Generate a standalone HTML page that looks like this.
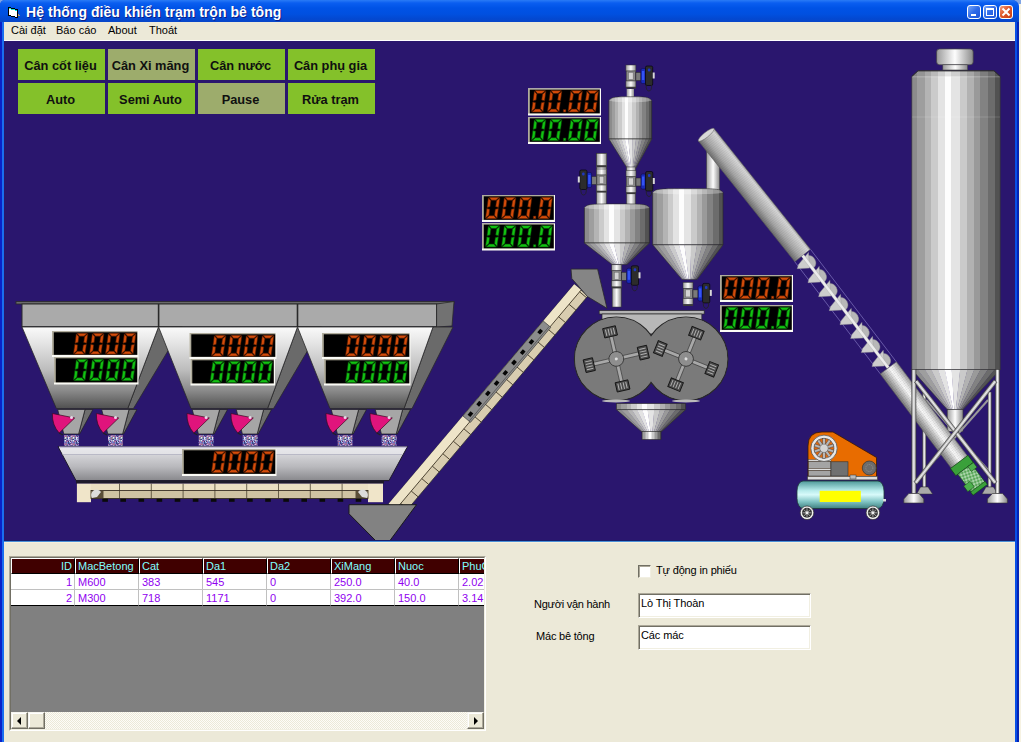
<!DOCTYPE html>
<html><head><meta charset="utf-8">
<style>
*{margin:0;padding:0;box-sizing:border-box}
html,body{width:1021px;height:742px;overflow:hidden;background:linear-gradient(#7fa4e4 0,#7fa4e4 4px,#f6f2e2 4px);font-family:"Liberation Sans",sans-serif}
.abs{position:absolute}
#win{position:absolute;left:0;top:0;width:1019px;height:742px;background:#0841d6;border-radius:5px 7px 0 0;overflow:hidden}
#title{position:absolute;left:0;top:0;width:1019px;height:22px;background:linear-gradient(#2a7bf6 0px,#0a5ef0 3px,#0053e6 8px,#0050e0 14px,#0348d0 19px,#0846c8 22px)}
#ttext{position:absolute;left:26px;top:4px;color:#fff;font-weight:bold;font-size:14px;letter-spacing:0.05px;white-space:nowrap;text-shadow:1px 1px 0 #0a1e8a}
#menu{position:absolute;left:4px;top:22px;width:1011px;height:18px;background:#ece9d8;font-size:11px;color:#000}
#menu span{position:absolute;top:2px}
#menuline{position:absolute;left:4px;top:40px;width:1011px;height:1px;background:#fff}
#draw{position:absolute;left:4px;top:41px;width:1011px;height:500px;background:#2a166e;overflow:hidden}
#bottom{position:absolute;left:4px;top:541px;width:1011px;height:201px;background:#ece9d8}
.btn{position:absolute;width:87px;height:31px;background:#84c12a;font-weight:bold;font-size:12.8px;color:#101010;text-align:center;line-height:33px;text-indent:-2px}
.btn.g{background:#9dac6c}
.tb{position:absolute;background:#fff;border-top:1px solid #aca899;border-left:1px solid #aca899;border-right:1px solid #fff;border-bottom:1px solid #fff;box-shadow:inset 1px 1px 0 #716f64, inset -1px -1px 0 #f1efe2;font-size:11px;padding-left:2px;color:#000}
.lbl{position:absolute;font-size:11px;color:#000;white-space:nowrap}
.htx{position:absolute;top:1px;height:15px;color:#80ffff;font-size:11px;line-height:15px;white-space:nowrap}
.dtx{position:absolute;height:15px;color:#9000f0;font-size:11px;line-height:16px;white-space:nowrap}
#grid{position:absolute;left:6px;top:15px;width:476px;height:174px;background:#808080;border-top:1px solid #aca899;border-left:1px solid #aca899;border-right:2px solid #fff;border-bottom:2px solid #fff;overflow:hidden}
.hdr{position:absolute;top:2px;height:15px;background:#400000;color:#7ff0f0;font-size:11px;line-height:15px}
.cell{position:absolute;height:15px;background:#fff;color:#a000e0;font-size:11px;line-height:15px}
</style></head><body>
<div id="win">
  <div id="title">
    <svg class="abs" style="left:0;top:0" width="24" height="22" viewBox="0 0 24 22" shape-rendering="crispEdges"><rect x="8" y="7" width="3" height="1" fill="#000"/><rect x="8" y="8" width="1" height="1" fill="#000"/><rect x="9" y="8" width="2" height="1" fill="#10e8e8"/><rect x="11" y="8" width="4" height="1" fill="#000"/><rect x="8" y="9" width="1" height="1" fill="#000"/><rect x="9" y="9" width="2" height="1" fill="#fff"/><rect x="11" y="9" width="4" height="1" fill="#10e8e8"/><rect x="15" y="9" width="3" height="1" fill="#000"/><rect x="8" y="10" width="1" height="1" fill="#000"/><rect x="9" y="10" width="6" height="1" fill="#fff"/><rect x="15" y="10" width="2" height="1" fill="#10e8e8"/><rect x="17" y="10" width="1" height="1" fill="#000"/><rect x="8" y="11" width="1" height="1" fill="#000"/><rect x="9" y="11" width="8" height="1" fill="#fff"/><rect x="17" y="11" width="1" height="1" fill="#000"/><rect x="8" y="12" width="1" height="1" fill="#000"/><rect x="9" y="12" width="8" height="1" fill="#fff"/><rect x="17" y="12" width="1" height="1" fill="#000"/><rect x="8" y="13" width="1" height="1" fill="#000"/><rect x="9" y="13" width="8" height="1" fill="#fff"/><rect x="17" y="13" width="1" height="1" fill="#000"/><rect x="8" y="14" width="1" height="1" fill="#000"/><rect x="9" y="14" width="8" height="1" fill="#fff"/><rect x="17" y="14" width="1" height="1" fill="#000"/><rect x="8" y="15" width="3" height="1" fill="#000"/><rect x="11" y="15" width="6" height="1" fill="#fff"/><rect x="17" y="15" width="1" height="1" fill="#000"/><rect x="11" y="16" width="4" height="1" fill="#000"/><rect x="15" y="16" width="2" height="1" fill="#fff"/><rect x="17" y="16" width="1" height="1" fill="#000"/><rect x="15" y="17" width="3" height="1" fill="#000"/><rect x="18" y="15" width="2" height="1" fill="#a89070"/><rect x="18" y="14" width="1" height="1" fill="#a89070"/></svg>
    <div id="ttext">Hệ thống điều khiển trạm trộn bê tông</div>
    <div class="abs" style="left:967px;top:5px;width:14px;height:14px;border:1px solid #fff;border-radius:3px;background:linear-gradient(135deg,#7aa8fa,#2e6ae8 50%,#1f55d8)"><div class="abs" style="left:3px;top:8px;width:5px;height:2px;background:#fff"></div></div>
    <div class="abs" style="left:983px;top:5px;width:14px;height:14px;border:1px solid #fff;border-radius:3px;background:linear-gradient(135deg,#7aa8fa,#2e6ae8 50%,#1f55d8)"><div class="abs" style="left:2px;top:2px;width:8px;height:8px;border:1px solid #fff;border-top-width:2px"></div></div>
    <div class="abs" style="left:999px;top:5px;width:14px;height:14px;border:1px solid #fff;border-radius:3px;background:linear-gradient(135deg,#f4a080,#e0582a 45%,#c63c12)"><svg class="abs" style="left:1px;top:1px" width="10" height="10" viewBox="0 0 10 10"><path d="M1.5,1.5 L8.5,8.5 M8.5,1.5 L1.5,8.5" stroke="#fff" stroke-width="2"/></svg></div>
  </div>
  <div id="menu">
    <span style="left:7px">Cài đặt</span>
    <span style="left:52px">Báo cáo</span>
    <span style="left:104px">About</span>
    <span style="left:145px">Thoát</span>
  </div>
  <div id="menuline"></div>
  <div id="draw">
    <svg id="svg" class="abs" style="left:-4px;top:-41px" width="1021" height="742" viewBox="0 0 1021 742">
<defs>
<linearGradient id="cyl" x1="0" y1="0" x2="1" y2="0"><stop offset="0" stop-color="#8c8c8c"/><stop offset="0.064" stop-color="#8c8c8c"/><stop offset="0.064" stop-color="#9e9e9e"/><stop offset="0.147" stop-color="#9e9e9e"/><stop offset="0.147" stop-color="#b4b4b4"/><stop offset="0.218" stop-color="#b4b4b4"/><stop offset="0.218" stop-color="#cbcbcb"/><stop offset="0.295" stop-color="#cbcbcb"/><stop offset="0.295" stop-color="#e3e3e3"/><stop offset="0.372" stop-color="#e3e3e3"/><stop offset="0.372" stop-color="#fdfdfd"/><stop offset="0.449" stop-color="#fdfdfd"/><stop offset="0.449" stop-color="#e4e4e4"/><stop offset="0.545" stop-color="#e4e4e4"/><stop offset="0.545" stop-color="#cacaca"/><stop offset="0.628" stop-color="#cacaca"/><stop offset="0.628" stop-color="#b2b2b2"/><stop offset="0.705" stop-color="#b2b2b2"/><stop offset="0.705" stop-color="#9a9a9a"/><stop offset="0.776" stop-color="#9a9a9a"/><stop offset="0.776" stop-color="#828282"/><stop offset="0.859" stop-color="#828282"/><stop offset="0.859" stop-color="#6c6c6c"/><stop offset="0.936" stop-color="#6c6c6c"/><stop offset="0.936" stop-color="#525252"/><stop offset="1" stop-color="#525252"/></linearGradient>
<linearGradient id="binface" x1="0" y1="0" x2="0" y2="1"><stop offset="0" stop-color="#fafafa"/><stop offset="0.22" stop-color="#e2e2e2"/><stop offset="0.53" stop-color="#bcbcbc"/><stop offset="0.78" stop-color="#8a8a8a"/><stop offset="1" stop-color="#505050"/></linearGradient>
<linearGradient id="weigh" x1="0" y1="0" x2="0" y2="1"><stop offset="0" stop-color="#e8e8ec"/><stop offset="0.23" stop-color="#e2e2e6"/><stop offset="0.24" stop-color="#d4d4d8"/><stop offset="0.6" stop-color="#b8b8bc"/><stop offset="1" stop-color="#88888c"/></linearGradient>
<linearGradient id="tube" x1="0" y1="0" x2="0" y2="1"><stop offset="0" stop-color="#a0a0a0"/><stop offset="0.12" stop-color="#d8d8d8"/><stop offset="0.3" stop-color="#cacaca"/><stop offset="0.65" stop-color="#a8a8a8"/><stop offset="1" stop-color="#6e6e6e"/></linearGradient><linearGradient id="tube2" x1="0" y1="0" x2="0" y2="1"><stop offset="0" stop-color="#9a9a9a"/><stop offset="0.3" stop-color="#e8e8e8"/><stop offset="0.45" stop-color="#fafafa"/><stop offset="0.7" stop-color="#c0c0c0"/><stop offset="1" stop-color="#7a7a7a"/></linearGradient><pattern id="vdith" width="2" height="2" patternUnits="userSpaceOnUse"><rect width="1" height="2" fill="#000" fill-opacity="0.06"/></pattern>
<linearGradient id="tank" x1="0" y1="0" x2="0" y2="1"><stop offset="0" stop-color="#4f9a9a"/><stop offset="0.35" stop-color="#b8ecec"/><stop offset="0.5" stop-color="#d8fafa"/><stop offset="0.75" stop-color="#80c4c4"/><stop offset="1" stop-color="#3e8080"/></linearGradient>
<linearGradient id="hcap" x1="0" y1="0" x2="1" y2="0"><stop offset="0" stop-color="#9a9a9a"/><stop offset="0.5" stop-color="#fdfdfd"/><stop offset="1" stop-color="#8a8a8a"/></linearGradient>
<linearGradient id="leg" x1="0" y1="0" x2="1" y2="0"><stop offset="0" stop-color="#8a8a8a"/><stop offset="0.5" stop-color="#f4f4f4"/><stop offset="1" stop-color="#7a7a7a"/></linearGradient>
<linearGradient id="brace" x1="0" y1="0" x2="0" y2="1"><stop offset="0" stop-color="#8a8a8a"/><stop offset="0.5" stop-color="#f0f0f0"/><stop offset="1" stop-color="#7a7a7a"/></linearGradient>
<pattern id="mat" width="8" height="8" patternUnits="userSpaceOnUse"><rect width="8" height="8" fill="#8880c0"/><rect x="0" y="0" width="1" height="1" fill="#a0a0c0"/><rect x="1" y="0" width="1" height="1" fill="#e8e8f0"/><rect x="2" y="0" width="1" height="1" fill="#8060b0"/><rect x="3" y="0" width="1" height="1" fill="#505090"/><rect x="4" y="0" width="1" height="1" fill="#b070b0"/><rect x="5" y="0" width="1" height="1" fill="#7090d0"/><rect x="6" y="0" width="1" height="1" fill="#8080b0"/><rect x="7" y="0" width="1" height="1" fill="#c0c0e0"/><rect x="0" y="1" width="1" height="1" fill="#7090d0"/><rect x="1" y="1" width="1" height="1" fill="#a0a0c0"/><rect x="2" y="1" width="1" height="1" fill="#a07090"/><rect x="3" y="1" width="1" height="1" fill="#b070b0"/><rect x="4" y="1" width="1" height="1" fill="#3a3a70"/><rect x="5" y="1" width="1" height="1" fill="#c0c0e0"/><rect x="6" y="1" width="1" height="1" fill="#404080"/><rect x="7" y="1" width="1" height="1" fill="#b070b0"/><rect x="0" y="2" width="1" height="1" fill="#7090d0"/><rect x="1" y="2" width="1" height="1" fill="#8060b0"/><rect x="2" y="2" width="1" height="1" fill="#8060b0"/><rect x="3" y="2" width="1" height="1" fill="#7090d0"/><rect x="4" y="2" width="1" height="1" fill="#404080"/><rect x="5" y="2" width="1" height="1" fill="#7090d0"/><rect x="6" y="2" width="1" height="1" fill="#c0c0e0"/><rect x="7" y="2" width="1" height="1" fill="#8060b0"/><rect x="0" y="3" width="1" height="1" fill="#b070b0"/><rect x="1" y="3" width="1" height="1" fill="#8080b0"/><rect x="2" y="3" width="1" height="1" fill="#a07090"/><rect x="3" y="3" width="1" height="1" fill="#7090d0"/><rect x="4" y="3" width="1" height="1" fill="#404080"/><rect x="5" y="3" width="1" height="1" fill="#505090"/><rect x="6" y="3" width="1" height="1" fill="#505090"/><rect x="7" y="3" width="1" height="1" fill="#a07090"/><rect x="0" y="4" width="1" height="1" fill="#b070b0"/><rect x="1" y="4" width="1" height="1" fill="#a07090"/><rect x="2" y="4" width="1" height="1" fill="#a07090"/><rect x="3" y="4" width="1" height="1" fill="#8060b0"/><rect x="4" y="4" width="1" height="1" fill="#b070b0"/><rect x="5" y="4" width="1" height="1" fill="#404080"/><rect x="6" y="4" width="1" height="1" fill="#b070b0"/><rect x="7" y="4" width="1" height="1" fill="#c0c0e0"/><rect x="0" y="5" width="1" height="1" fill="#8080b0"/><rect x="1" y="5" width="1" height="1" fill="#e8e8f0"/><rect x="2" y="5" width="1" height="1" fill="#90b0a0"/><rect x="3" y="5" width="1" height="1" fill="#8060b0"/><rect x="4" y="5" width="1" height="1" fill="#e8e8f0"/><rect x="5" y="5" width="1" height="1" fill="#c0c0e0"/><rect x="6" y="5" width="1" height="1" fill="#7090d0"/><rect x="7" y="5" width="1" height="1" fill="#a07090"/><rect x="0" y="6" width="1" height="1" fill="#90b0a0"/><rect x="1" y="6" width="1" height="1" fill="#c0c0e0"/><rect x="2" y="6" width="1" height="1" fill="#8080b0"/><rect x="3" y="6" width="1" height="1" fill="#505090"/><rect x="4" y="6" width="1" height="1" fill="#e8e8f0"/><rect x="5" y="6" width="1" height="1" fill="#7090d0"/><rect x="6" y="6" width="1" height="1" fill="#a07090"/><rect x="7" y="6" width="1" height="1" fill="#a07090"/><rect x="0" y="7" width="1" height="1" fill="#505090"/><rect x="1" y="7" width="1" height="1" fill="#404080"/><rect x="2" y="7" width="1" height="1" fill="#a0a0c0"/><rect x="3" y="7" width="1" height="1" fill="#7090d0"/><rect x="4" y="7" width="1" height="1" fill="#c0c0e0"/><rect x="5" y="7" width="1" height="1" fill="#d0b0d0"/><rect x="6" y="7" width="1" height="1" fill="#7090d0"/><rect x="7" y="7" width="1" height="1" fill="#a07090"/></pattern>
<pattern id="dith" width="2" height="2" patternUnits="userSpaceOnUse"><rect width="2" height="2" fill="#fff" fill-opacity="0"/><rect width="1" height="1" fill="#000" fill-opacity="0.12"/></pattern>
<pattern id="gdith" width="2" height="2" patternUnits="userSpaceOnUse"><rect width="1" height="1" fill="#2a8a2a"/><rect x="1" y="1" width="1" height="1" fill="#2a8a2a"/></pattern>
</defs>
<g id="bins">
<rect x="16" y="301.5" width="438" height="2.5" fill="#6a6a6a" stroke="#2a2a2a" stroke-width="0.8"/>
<rect x="22" y="304" width="414.6" height="22.7" fill="#aaaaaa" stroke="#2a2a2a" stroke-width="1"/>
<polygon points="436.6,304.0 454.0,301.5 452.0,326.0 436.6,327.0" fill="#727272" stroke="#2a2a2a" stroke-width="0.8" />
<line x1="158.6" y1="304" x2="158.6" y2="327" stroke="#2a2a2a" stroke-width="1.6"/>
<line x1="297.5" y1="304" x2="297.5" y2="327" stroke="#2a2a2a" stroke-width="1.6"/>
<polygon points="158.5,327.0 182.3,327.0 133.4,408.6 127.7,408.6" fill="#6a6a6a" stroke="#2a2a2a" stroke-width="0.8" />
<polygon points="22.0,327.0 158.5,327.0 127.7,408.6 56.4,408.6" fill="url(#binface)" stroke="#2a2a2a" stroke-width="0.8" />
<polygon points="85.0,409.5 92.9,409.5 79.6,434.0 78.6,434.0" fill="#6e6e6e" stroke="#1e1e1e" stroke-width="0.7" />
<polygon points="57.7,409.5 85.0,409.5 78.6,434.0 63.8,434.0" fill="#a6a6a6" stroke="#1e1e1e" stroke-width="0.7" />
<rect x="64.1" y="435" width="14.8" height="10.6" fill="url(#mat)"/>
<path d="M52.4,413.5 L74.7,418 L59.2,433 Q51.9,425 52.4,413.5Z" fill="#e0147c" stroke="#3a0a20" stroke-width="0.7"/>
<line x1="59.2" y1="433" x2="62.9" y2="435" stroke="#222" stroke-width="1.2"/>
<circle cx="71.5" cy="417.4" r="1.5" fill="#e8d8e8"/>
<polygon points="129.0,409.5 136.9,409.5 123.6,434.0 122.6,434.0" fill="#6e6e6e" stroke="#1e1e1e" stroke-width="0.7" />
<polygon points="101.7,409.5 129.0,409.5 122.6,434.0 107.8,434.0" fill="#a6a6a6" stroke="#1e1e1e" stroke-width="0.7" />
<rect x="108.1" y="435" width="14.8" height="10.6" fill="url(#mat)"/>
<path d="M96.4,413.5 L118.7,418 L103.2,433 Q95.9,425 96.4,413.5Z" fill="#e0147c" stroke="#3a0a20" stroke-width="0.7"/>
<line x1="103.2" y1="433" x2="106.9" y2="435" stroke="#222" stroke-width="1.2"/>
<circle cx="115.5" cy="417.4" r="1.5" fill="#e8d8e8"/>
<polygon points="297.5,327.0 321.5,327.0 273.5,408.6 267.5,408.6" fill="#6a6a6a" stroke="#2a2a2a" stroke-width="0.8" />
<polygon points="158.6,327.0 297.5,327.0 267.5,408.6 191.0,408.6" fill="url(#binface)" stroke="#2a2a2a" stroke-width="0.8" />
<polygon points="219.6,409.5 227.5,409.5 214.2,434.0 213.2,434.0" fill="#6e6e6e" stroke="#1e1e1e" stroke-width="0.7" />
<polygon points="192.3,409.5 219.6,409.5 213.2,434.0 198.4,434.0" fill="#a6a6a6" stroke="#1e1e1e" stroke-width="0.7" />
<rect x="198.7" y="435" width="14.8" height="10.6" fill="url(#mat)"/>
<path d="M187.0,413.5 L209.3,418 L193.8,433 Q186.5,425 187.0,413.5Z" fill="#e0147c" stroke="#3a0a20" stroke-width="0.7"/>
<line x1="193.8" y1="433" x2="197.5" y2="435" stroke="#222" stroke-width="1.2"/>
<circle cx="206.1" cy="417.4" r="1.5" fill="#e8d8e8"/>
<polygon points="263.6,409.5 271.5,409.5 258.2,434.0 257.2,434.0" fill="#6e6e6e" stroke="#1e1e1e" stroke-width="0.7" />
<polygon points="236.3,409.5 263.6,409.5 257.2,434.0 242.4,434.0" fill="#a6a6a6" stroke="#1e1e1e" stroke-width="0.7" />
<rect x="242.7" y="435" width="14.8" height="10.6" fill="url(#mat)"/>
<path d="M231.0,413.5 L253.3,418 L237.8,433 Q230.5,425 231.0,413.5Z" fill="#e0147c" stroke="#3a0a20" stroke-width="0.7"/>
<line x1="237.8" y1="433" x2="241.5" y2="435" stroke="#222" stroke-width="1.2"/>
<circle cx="250.1" cy="417.4" r="1.5" fill="#e8d8e8"/>
<polygon points="433.0,327.0 453.0,327.0 412.0,408.6 404.0,408.6" fill="#6a6a6a" stroke="#2a2a2a" stroke-width="0.8" />
<polygon points="297.5,327.0 433.0,327.0 404.0,408.6 330.0,408.6" fill="url(#binface)" stroke="#2a2a2a" stroke-width="0.8" />
<polygon points="358.6,409.5 366.5,409.5 353.2,434.0 352.2,434.0" fill="#6e6e6e" stroke="#1e1e1e" stroke-width="0.7" />
<polygon points="331.3,409.5 358.6,409.5 352.2,434.0 337.4,434.0" fill="#a6a6a6" stroke="#1e1e1e" stroke-width="0.7" />
<rect x="337.7" y="435" width="14.8" height="10.6" fill="url(#mat)"/>
<path d="M326.0,413.5 L348.3,418 L332.8,433 Q325.5,425 326.0,413.5Z" fill="#e0147c" stroke="#3a0a20" stroke-width="0.7"/>
<line x1="332.8" y1="433" x2="336.5" y2="435" stroke="#222" stroke-width="1.2"/>
<circle cx="345.1" cy="417.4" r="1.5" fill="#e8d8e8"/>
<polygon points="402.6,409.5 410.5,409.5 397.2,434.0 396.2,434.0" fill="#6e6e6e" stroke="#1e1e1e" stroke-width="0.7" />
<polygon points="375.3,409.5 402.6,409.5 396.2,434.0 381.4,434.0" fill="#a6a6a6" stroke="#1e1e1e" stroke-width="0.7" />
<rect x="381.7" y="435" width="14.8" height="10.6" fill="url(#mat)"/>
<path d="M370.0,413.5 L392.3,418 L376.8,433 Q369.5,425 370.0,413.5Z" fill="#e0147c" stroke="#3a0a20" stroke-width="0.7"/>
<line x1="376.8" y1="433" x2="380.5" y2="435" stroke="#222" stroke-width="1.2"/>
<circle cx="389.1" cy="417.4" r="1.5" fill="#e8d8e8"/>
<rect x="52" y="331" width="86.5" height="26.0" fill="#fbfbf6"/>
<rect x="52" y="331" width="85.5" height="24.0" fill="#b0ac9c"/>
<rect x="53.8" y="332.3" width="83.4" height="22.5" fill="#000"/>
<path d="M124.95,333.20 L135.45,333.20 L132.02,336.20 L127.52,336.20ZM124.32,333.75 L126.89,336.75 L126.09,342.40 L122.98,343.15ZM122.82,344.25 L125.71,345.00 L124.91,350.65 L121.48,353.65ZM135.92,333.75 L134.58,343.15 L131.69,342.40 L132.49,336.75ZM134.42,344.25 L133.08,353.65 L130.51,350.65 L131.31,345.00ZM121.95,354.20 L132.45,354.20 L129.88,351.20 L125.38,351.20ZM108.95,333.20 L119.45,333.20 L116.02,336.20 L111.52,336.20ZM108.32,333.75 L110.89,336.75 L110.09,342.40 L106.98,343.15ZM106.82,344.25 L109.71,345.00 L108.91,350.65 L105.48,353.65ZM119.92,333.75 L118.58,343.15 L115.69,342.40 L116.49,336.75ZM118.42,344.25 L117.08,353.65 L114.51,350.65 L115.31,345.00ZM105.95,354.20 L116.45,354.20 L113.88,351.20 L109.38,351.20ZM92.95,333.20 L103.45,333.20 L100.02,336.20 L95.52,336.20ZM92.32,333.75 L94.89,336.75 L94.09,342.40 L90.98,343.15ZM90.82,344.25 L93.71,345.00 L92.91,350.65 L89.48,353.65ZM103.92,333.75 L102.58,343.15 L99.69,342.40 L100.49,336.75ZM102.42,344.25 L101.08,353.65 L98.51,350.65 L99.31,345.00ZM89.95,354.20 L100.45,354.20 L97.88,351.20 L93.38,351.20ZM76.95,333.20 L87.45,333.20 L84.02,336.20 L79.52,336.20ZM76.32,333.75 L78.89,336.75 L78.09,342.40 L74.98,343.15ZM74.82,344.25 L77.71,345.00 L76.91,350.65 L73.48,353.65ZM87.92,333.75 L86.58,343.15 L83.69,342.40 L84.49,336.75ZM86.42,344.25 L85.08,353.65 L82.51,350.65 L83.31,345.00ZM73.95,354.20 L84.45,354.20 L81.88,351.20 L77.38,351.20Z" fill="#d44c0a" stroke="#4a1800" stroke-width="0.6"/>
<rect x="54" y="357" width="84.5" height="27.5" fill="#fbfbf6"/>
<rect x="54" y="357" width="83.5" height="25.5" fill="#b0ac9c"/>
<rect x="55.8" y="358.3" width="81.4" height="24.0" fill="#000"/>
<path d="M124.95,359.20 L135.45,359.20 L132.03,362.20 L127.53,362.20ZM124.32,359.75 L126.90,362.75 L126.08,368.65 L122.98,369.40ZM122.82,370.50 L125.72,371.25 L124.90,377.15 L121.48,380.15ZM135.92,359.75 L134.58,369.40 L131.68,368.65 L132.50,362.75ZM134.42,370.50 L133.08,380.15 L130.50,377.15 L131.32,371.25ZM121.95,380.70 L132.45,380.70 L129.87,377.70 L125.37,377.70ZM108.95,359.20 L119.45,359.20 L116.03,362.20 L111.53,362.20ZM108.32,359.75 L110.90,362.75 L110.08,368.65 L106.98,369.40ZM106.82,370.50 L109.72,371.25 L108.90,377.15 L105.48,380.15ZM119.92,359.75 L118.58,369.40 L115.68,368.65 L116.50,362.75ZM118.42,370.50 L117.08,380.15 L114.50,377.15 L115.32,371.25ZM105.95,380.70 L116.45,380.70 L113.87,377.70 L109.37,377.70ZM92.95,359.20 L103.45,359.20 L100.03,362.20 L95.53,362.20ZM92.32,359.75 L94.90,362.75 L94.08,368.65 L90.98,369.40ZM90.82,370.50 L93.72,371.25 L92.90,377.15 L89.48,380.15ZM103.92,359.75 L102.58,369.40 L99.68,368.65 L100.50,362.75ZM102.42,370.50 L101.08,380.15 L98.50,377.15 L99.32,371.25ZM89.95,380.70 L100.45,380.70 L97.87,377.70 L93.37,377.70ZM76.95,359.20 L87.45,359.20 L84.03,362.20 L79.53,362.20ZM76.32,359.75 L78.90,362.75 L78.08,368.65 L74.98,369.40ZM74.82,370.50 L77.72,371.25 L76.90,377.15 L73.48,380.15ZM87.92,359.75 L86.58,369.40 L83.68,368.65 L84.50,362.75ZM86.42,370.50 L85.08,380.15 L82.50,377.15 L83.32,371.25ZM73.95,380.70 L84.45,380.70 L81.87,377.70 L77.37,377.70Z" fill="#12c212" stroke="#054005" stroke-width="0.6"/>
<rect x="189.5" y="333" width="87.0" height="26.0" fill="#fbfbf6"/>
<rect x="189.5" y="333" width="86.0" height="24.0" fill="#b0ac9c"/>
<rect x="191.3" y="334.3" width="83.9" height="22.5" fill="#000"/>
<path d="M262.95,335.20 L273.45,335.20 L270.02,338.20 L265.52,338.20ZM262.32,335.75 L264.89,338.75 L264.09,344.40 L260.98,345.15ZM260.82,346.25 L263.71,347.00 L262.91,352.65 L259.48,355.65ZM273.92,335.75 L272.58,345.15 L269.69,344.40 L270.49,338.75ZM272.42,346.25 L271.08,355.65 L268.51,352.65 L269.31,347.00ZM259.95,356.20 L270.45,356.20 L267.88,353.20 L263.38,353.20ZM246.95,335.20 L257.45,335.20 L254.02,338.20 L249.52,338.20ZM246.32,335.75 L248.89,338.75 L248.09,344.40 L244.98,345.15ZM244.82,346.25 L247.71,347.00 L246.91,352.65 L243.48,355.65ZM257.92,335.75 L256.58,345.15 L253.69,344.40 L254.49,338.75ZM256.42,346.25 L255.08,355.65 L252.51,352.65 L253.31,347.00ZM243.95,356.20 L254.45,356.20 L251.88,353.20 L247.38,353.20ZM230.95,335.20 L241.45,335.20 L238.02,338.20 L233.52,338.20ZM230.32,335.75 L232.89,338.75 L232.09,344.40 L228.98,345.15ZM228.82,346.25 L231.71,347.00 L230.91,352.65 L227.48,355.65ZM241.92,335.75 L240.58,345.15 L237.69,344.40 L238.49,338.75ZM240.42,346.25 L239.08,355.65 L236.51,352.65 L237.31,347.00ZM227.95,356.20 L238.45,356.20 L235.88,353.20 L231.38,353.20ZM214.95,335.20 L225.45,335.20 L222.02,338.20 L217.52,338.20ZM214.32,335.75 L216.89,338.75 L216.09,344.40 L212.98,345.15ZM212.82,346.25 L215.71,347.00 L214.91,352.65 L211.48,355.65ZM225.92,335.75 L224.58,345.15 L221.69,344.40 L222.49,338.75ZM224.42,346.25 L223.08,355.65 L220.51,352.65 L221.31,347.00ZM211.95,356.20 L222.45,356.20 L219.88,353.20 L215.38,353.20Z" fill="#d44c0a" stroke="#4a1800" stroke-width="0.6"/>
<rect x="190.5" y="359" width="84.5" height="26.5" fill="#fbfbf6"/>
<rect x="190.5" y="359" width="83.5" height="24.5" fill="#b0ac9c"/>
<rect x="192.3" y="360.3" width="81.4" height="23.0" fill="#000"/>
<path d="M261.45,361.20 L271.95,361.20 L268.53,364.20 L264.03,364.20ZM260.82,361.75 L263.40,364.75 L262.58,370.65 L259.48,371.40ZM259.32,372.50 L262.22,373.25 L261.40,379.15 L257.98,382.15ZM272.42,361.75 L271.08,371.40 L268.18,370.65 L269.00,364.75ZM270.92,372.50 L269.58,382.15 L267.00,379.15 L267.82,373.25ZM258.45,382.70 L268.95,382.70 L266.37,379.70 L261.87,379.70ZM245.45,361.20 L255.95,361.20 L252.53,364.20 L248.03,364.20ZM244.82,361.75 L247.40,364.75 L246.58,370.65 L243.48,371.40ZM243.32,372.50 L246.22,373.25 L245.40,379.15 L241.98,382.15ZM256.42,361.75 L255.08,371.40 L252.18,370.65 L253.00,364.75ZM254.92,372.50 L253.58,382.15 L251.00,379.15 L251.82,373.25ZM242.45,382.70 L252.95,382.70 L250.37,379.70 L245.87,379.70ZM229.45,361.20 L239.95,361.20 L236.53,364.20 L232.03,364.20ZM228.82,361.75 L231.40,364.75 L230.58,370.65 L227.48,371.40ZM227.32,372.50 L230.22,373.25 L229.40,379.15 L225.98,382.15ZM240.42,361.75 L239.08,371.40 L236.18,370.65 L237.00,364.75ZM238.92,372.50 L237.58,382.15 L235.00,379.15 L235.82,373.25ZM226.45,382.70 L236.95,382.70 L234.37,379.70 L229.87,379.70ZM213.45,361.20 L223.95,361.20 L220.53,364.20 L216.03,364.20ZM212.82,361.75 L215.40,364.75 L214.58,370.65 L211.48,371.40ZM211.32,372.50 L214.22,373.25 L213.40,379.15 L209.98,382.15ZM224.42,361.75 L223.08,371.40 L220.18,370.65 L221.00,364.75ZM222.92,372.50 L221.58,382.15 L219.00,379.15 L219.82,373.25ZM210.45,382.70 L220.95,382.70 L218.37,379.70 L213.87,379.70Z" fill="#12c212" stroke="#054005" stroke-width="0.6"/>
<rect x="322" y="333" width="88.5" height="26.0" fill="#fbfbf6"/>
<rect x="322" y="333" width="87.5" height="24.0" fill="#b0ac9c"/>
<rect x="323.8" y="334.3" width="85.4" height="22.5" fill="#000"/>
<path d="M396.95,335.20 L407.45,335.20 L404.02,338.20 L399.52,338.20ZM396.32,335.75 L398.89,338.75 L398.09,344.40 L394.98,345.15ZM394.82,346.25 L397.71,347.00 L396.91,352.65 L393.48,355.65ZM407.92,335.75 L406.58,345.15 L403.69,344.40 L404.49,338.75ZM406.42,346.25 L405.08,355.65 L402.51,352.65 L403.31,347.00ZM393.95,356.20 L404.45,356.20 L401.88,353.20 L397.38,353.20ZM380.95,335.20 L391.45,335.20 L388.02,338.20 L383.52,338.20ZM380.32,335.75 L382.89,338.75 L382.09,344.40 L378.98,345.15ZM378.82,346.25 L381.71,347.00 L380.91,352.65 L377.48,355.65ZM391.92,335.75 L390.58,345.15 L387.69,344.40 L388.49,338.75ZM390.42,346.25 L389.08,355.65 L386.51,352.65 L387.31,347.00ZM377.95,356.20 L388.45,356.20 L385.88,353.20 L381.38,353.20ZM364.95,335.20 L375.45,335.20 L372.02,338.20 L367.52,338.20ZM364.32,335.75 L366.89,338.75 L366.09,344.40 L362.98,345.15ZM362.82,346.25 L365.71,347.00 L364.91,352.65 L361.48,355.65ZM375.92,335.75 L374.58,345.15 L371.69,344.40 L372.49,338.75ZM374.42,346.25 L373.08,355.65 L370.51,352.65 L371.31,347.00ZM361.95,356.20 L372.45,356.20 L369.88,353.20 L365.38,353.20ZM348.95,335.20 L359.45,335.20 L356.02,338.20 L351.52,338.20ZM348.32,335.75 L350.89,338.75 L350.09,344.40 L346.98,345.15ZM346.82,346.25 L349.71,347.00 L348.91,352.65 L345.48,355.65ZM359.92,335.75 L358.58,345.15 L355.69,344.40 L356.49,338.75ZM358.42,346.25 L357.08,355.65 L354.51,352.65 L355.31,347.00ZM345.95,356.20 L356.45,356.20 L353.88,353.20 L349.38,353.20Z" fill="#d44c0a" stroke="#4a1800" stroke-width="0.6"/>
<rect x="324" y="359" width="86.5" height="26.5" fill="#fbfbf6"/>
<rect x="324" y="359" width="85.5" height="24.5" fill="#b0ac9c"/>
<rect x="325.8" y="360.3" width="83.4" height="23.0" fill="#000"/>
<path d="M396.95,361.20 L407.45,361.20 L404.03,364.20 L399.53,364.20ZM396.32,361.75 L398.90,364.75 L398.08,370.65 L394.98,371.40ZM394.82,372.50 L397.72,373.25 L396.90,379.15 L393.48,382.15ZM407.92,361.75 L406.58,371.40 L403.68,370.65 L404.50,364.75ZM406.42,372.50 L405.08,382.15 L402.50,379.15 L403.32,373.25ZM393.95,382.70 L404.45,382.70 L401.87,379.70 L397.37,379.70ZM380.95,361.20 L391.45,361.20 L388.03,364.20 L383.53,364.20ZM380.32,361.75 L382.90,364.75 L382.08,370.65 L378.98,371.40ZM378.82,372.50 L381.72,373.25 L380.90,379.15 L377.48,382.15ZM391.92,361.75 L390.58,371.40 L387.68,370.65 L388.50,364.75ZM390.42,372.50 L389.08,382.15 L386.50,379.15 L387.32,373.25ZM377.95,382.70 L388.45,382.70 L385.87,379.70 L381.37,379.70ZM364.95,361.20 L375.45,361.20 L372.03,364.20 L367.53,364.20ZM364.32,361.75 L366.90,364.75 L366.08,370.65 L362.98,371.40ZM362.82,372.50 L365.72,373.25 L364.90,379.15 L361.48,382.15ZM375.92,361.75 L374.58,371.40 L371.68,370.65 L372.50,364.75ZM374.42,372.50 L373.08,382.15 L370.50,379.15 L371.32,373.25ZM361.95,382.70 L372.45,382.70 L369.87,379.70 L365.37,379.70ZM348.95,361.20 L359.45,361.20 L356.03,364.20 L351.53,364.20ZM348.32,361.75 L350.90,364.75 L350.08,370.65 L346.98,371.40ZM346.82,372.50 L349.72,373.25 L348.90,379.15 L345.48,382.15ZM359.92,361.75 L358.58,371.40 L355.68,370.65 L356.50,364.75ZM358.42,372.50 L357.08,382.15 L354.50,379.15 L355.32,373.25ZM345.95,382.70 L356.45,382.70 L353.87,379.70 L349.37,379.70Z" fill="#12c212" stroke="#054005" stroke-width="0.6"/>
</g>
<polygon points="58.0,446.6 407.5,446.6 389.0,480.6 76.0,480.6" fill="url(#weigh)" stroke="#1e1a2a" stroke-width="1" />
<line x1="59" y1="447" x2="407" y2="447" stroke="#b4acd8" stroke-width="1.2"/>
<line x1="62" y1="454.5" x2="403" y2="454.5" stroke="#a0a0b4" stroke-width="0.6"/>
<rect x="182" y="449" width="94.5" height="27.0" fill="#fbfbf6"/>
<rect x="182" y="449" width="93.5" height="25.0" fill="#b0ac9c"/>
<rect x="183.8" y="450.3" width="91.4" height="23.5" fill="#000"/>
<path d="M262.95,451.20 L273.45,451.20 L270.03,454.20 L265.53,454.20ZM262.32,451.75 L264.90,454.75 L264.08,460.65 L260.98,461.40ZM260.82,462.50 L263.72,463.25 L262.90,469.15 L259.48,472.15ZM273.92,451.75 L272.58,461.40 L269.68,460.65 L270.50,454.75ZM272.42,462.50 L271.08,472.15 L268.50,469.15 L269.32,463.25ZM259.95,472.70 L270.45,472.70 L267.87,469.70 L263.37,469.70ZM246.95,451.20 L257.45,451.20 L254.03,454.20 L249.53,454.20ZM246.32,451.75 L248.90,454.75 L248.08,460.65 L244.98,461.40ZM244.82,462.50 L247.72,463.25 L246.90,469.15 L243.48,472.15ZM257.92,451.75 L256.58,461.40 L253.68,460.65 L254.50,454.75ZM256.42,462.50 L255.08,472.15 L252.50,469.15 L253.32,463.25ZM243.95,472.70 L254.45,472.70 L251.87,469.70 L247.37,469.70ZM230.95,451.20 L241.45,451.20 L238.03,454.20 L233.53,454.20ZM230.32,451.75 L232.90,454.75 L232.08,460.65 L228.98,461.40ZM228.82,462.50 L231.72,463.25 L230.90,469.15 L227.48,472.15ZM241.92,451.75 L240.58,461.40 L237.68,460.65 L238.50,454.75ZM240.42,462.50 L239.08,472.15 L236.50,469.15 L237.32,463.25ZM227.95,472.70 L238.45,472.70 L235.87,469.70 L231.37,469.70ZM214.95,451.20 L225.45,451.20 L222.03,454.20 L217.53,454.20ZM214.32,451.75 L216.90,454.75 L216.08,460.65 L212.98,461.40ZM212.82,462.50 L215.72,463.25 L214.90,469.15 L211.48,472.15ZM225.92,451.75 L224.58,461.40 L221.68,460.65 L222.50,454.75ZM224.42,462.50 L223.08,472.15 L220.50,469.15 L221.32,463.25ZM211.95,472.70 L222.45,472.70 L219.87,469.70 L215.37,469.70Z" fill="#d44c0a" stroke="#4a1800" stroke-width="0.6"/>
<rect x="76" y="480.6" width="308" height="3" fill="#1e1a2a"/>
<rect x="76.9" y="483.6" width="14.1" height="18.6" fill="#f0e5c9"/>
<rect x="368" y="483.6" width="15" height="18.6" fill="#f0e5c9"/>
<rect x="91" y="483.6" width="277" height="7" fill="#ebdfc2"/>
<rect x="91" y="490.5" width="277" height="8" fill="#cfc3a3" stroke="#2e2618" stroke-width="0.8"/>
<line x1="119.5" y1="483.6" x2="119.5" y2="498.5" stroke="#3a3020" stroke-width="0.7"/>
<line x1="151.3" y1="483.6" x2="151.3" y2="498.5" stroke="#3a3020" stroke-width="0.7"/>
<line x1="183.1" y1="483.6" x2="183.1" y2="498.5" stroke="#3a3020" stroke-width="0.7"/>
<line x1="214.9" y1="483.6" x2="214.9" y2="498.5" stroke="#3a3020" stroke-width="0.7"/>
<line x1="246.7" y1="483.6" x2="246.7" y2="498.5" stroke="#3a3020" stroke-width="0.7"/>
<line x1="278.5" y1="483.6" x2="278.5" y2="498.5" stroke="#3a3020" stroke-width="0.7"/>
<line x1="310.3" y1="483.6" x2="310.3" y2="498.5" stroke="#3a3020" stroke-width="0.7"/>
<line x1="342.1" y1="483.6" x2="342.1" y2="498.5" stroke="#3a3020" stroke-width="0.7"/>
<path d="M91.5,491 h12 v7 h-12Z" fill="#5a4e38"/><path d="M92,498 a5,5 0 0 1 9,-6 l-4,5Z" fill="#dcdcdc"/>
<path d="M367.5,491 h-12 v7 h12Z" fill="#5a4e38"/><path d="M367,498 a5,5 0 0 0 -9,-6 l4,5Z" fill="#dcdcdc"/>
<rect x="102.3" y="498.8" width="5.6" height="3" fill="#0a0a0a"/>
<rect x="120.4" y="498.8" width="5.6" height="3" fill="#0a0a0a"/>
<rect x="138.5" y="498.8" width="5.6" height="3" fill="#0a0a0a"/>
<rect x="156.6" y="498.8" width="5.6" height="3" fill="#0a0a0a"/>
<rect x="174.7" y="498.8" width="5.6" height="3" fill="#0a0a0a"/>
<rect x="192.8" y="498.8" width="5.6" height="3" fill="#0a0a0a"/>
<rect x="210.9" y="498.8" width="5.6" height="3" fill="#0a0a0a"/>
<rect x="229.0" y="498.8" width="5.6" height="3" fill="#0a0a0a"/>
<rect x="247.1" y="498.8" width="5.6" height="3" fill="#0a0a0a"/>
<rect x="265.2" y="498.8" width="5.6" height="3" fill="#0a0a0a"/>
<rect x="283.3" y="498.8" width="5.6" height="3" fill="#0a0a0a"/>
<rect x="301.4" y="498.8" width="5.6" height="3" fill="#0a0a0a"/>
<rect x="319.5" y="498.8" width="5.6" height="3" fill="#0a0a0a"/>
<rect x="337.6" y="498.8" width="5.6" height="3" fill="#0a0a0a"/>
<rect x="355.7" y="498.8" width="5.6" height="3" fill="#0a0a0a"/>
<g transform="translate(388.7,503.8) rotate(-49.8)">
<rect x="0" y="0" width="287.5" height="18" fill="#d9cdb0" stroke="#2a2a2a" stroke-width="0.7"/>
<rect x="0" y="0" width="287.5" height="9.0" fill="#eee4c8"/>
<line x1="0" y1="9.0" x2="287.5" y2="9.0" stroke="#3a3020" stroke-width="0.8"/>
<line x1="8.0" y1="9.0" x2="8.0" y2="18" stroke="#3a3020" stroke-width="0.8"/>
<line x1="24.3" y1="9.0" x2="24.3" y2="18" stroke="#3a3020" stroke-width="0.8"/>
<line x1="40.6" y1="9.0" x2="40.6" y2="18" stroke="#3a3020" stroke-width="0.8"/>
<line x1="56.9" y1="9.0" x2="56.9" y2="18" stroke="#3a3020" stroke-width="0.8"/>
<line x1="73.2" y1="9.0" x2="73.2" y2="18" stroke="#3a3020" stroke-width="0.8"/>
<line x1="89.5" y1="9.0" x2="89.5" y2="18" stroke="#3a3020" stroke-width="0.8"/>
<line x1="105.8" y1="9.0" x2="105.8" y2="18" stroke="#3a3020" stroke-width="0.8"/>
<line x1="122.1" y1="9.0" x2="122.1" y2="18" stroke="#3a3020" stroke-width="0.8"/>
<line x1="138.4" y1="9.0" x2="138.4" y2="18" stroke="#3a3020" stroke-width="0.8"/>
<line x1="154.7" y1="9.0" x2="154.7" y2="18" stroke="#3a3020" stroke-width="0.8"/>
<line x1="171.0" y1="9.0" x2="171.0" y2="18" stroke="#3a3020" stroke-width="0.8"/>
<line x1="187.3" y1="9.0" x2="187.3" y2="18" stroke="#3a3020" stroke-width="0.8"/>
<line x1="203.6" y1="9.0" x2="203.6" y2="18" stroke="#3a3020" stroke-width="0.8"/>
<line x1="219.9" y1="9.0" x2="219.9" y2="18" stroke="#3a3020" stroke-width="0.8"/>
<line x1="236.2" y1="9.0" x2="236.2" y2="18" stroke="#3a3020" stroke-width="0.8"/>
<line x1="252.5" y1="9.0" x2="252.5" y2="18" stroke="#3a3020" stroke-width="0.8"/>
<line x1="268.8" y1="9.0" x2="268.8" y2="18" stroke="#3a3020" stroke-width="0.8"/>
<line x1="285.1" y1="9.0" x2="285.1" y2="18" stroke="#3a3020" stroke-width="0.8"/>
<rect x="115.0" y="0" width="124.4" height="9.9" fill="#8c8c8c" stroke="#333" stroke-width="0.6"/>
<line x1="115.0" y1="8.1" x2="239.3" y2="8.1" stroke="#555" stroke-width="0.8"/>
<rect x="119.0" y="2.7" width="4.6" height="3.6" fill="#050505"/>
<rect x="132.5" y="2.7" width="4.6" height="3.6" fill="#050505"/>
<rect x="146.0" y="2.7" width="4.6" height="3.6" fill="#050505"/>
<rect x="159.5" y="2.7" width="4.6" height="3.6" fill="#050505"/>
<rect x="173.0" y="2.7" width="4.6" height="3.6" fill="#050505"/>
<rect x="186.5" y="2.7" width="4.6" height="3.6" fill="#050505"/>
<rect x="200.0" y="2.7" width="4.6" height="3.6" fill="#050505"/>
<rect x="213.5" y="2.7" width="4.6" height="3.6" fill="#050505"/>
<rect x="227.0" y="2.7" width="4.6" height="3.6" fill="#050505"/>
</g>
<polygon points="571.0,269.1 597.6,269.1 607.0,308.3 587.4,296.5 571.8,278.5" fill="#858585" stroke="#2a2a2a" stroke-width="0.8" />
<polygon points="349.0,504.7 416.5,504.7 390.0,540.5 375.5,540.5 349.0,513.8" fill="#828282" stroke="#1a1a1a" stroke-width="1" />
<rect x="599.2" y="310.6" width="105" height="3.4" fill="#b4b4b4" stroke="#2a2a2a" stroke-width="0.7"/>
<polygon points="602.0,314.0 701.8,314.0 701.8,330.0 651.0,334.0 602.0,330.0" fill="#b8b8b8" stroke="#2a2a2a" stroke-width="0.7" />
<circle cx="616.3" cy="358.9" r="41.9" fill="#7a7a7a" stroke="#2a2a2a" stroke-width="1.2"/>
<circle cx="686" cy="358.9" r="41.9" fill="#7a7a7a" stroke="#2a2a2a" stroke-width="1.2"/>
<circle cx="616.3" cy="358.9" r="41.3" fill="#7a7a7a"/>
<circle cx="686" cy="358.9" r="41.3" fill="#7a7a7a"/>
<g transform="translate(616.3,358.9) rotate(-13)">
<g transform="rotate(0)"><rect x="6" y="-1.8" width="18" height="3.6" fill="#a8a8a8" stroke="#333" stroke-width="0.6"/><rect x="23" y="-6.5" width="9.5" height="13" fill="#4a4a4a" stroke="#141414" stroke-width="0.9"/><path d="M24.5,-4 h6.5 M24.5,-1.3 h6.5 M24.5,1.4 h6.5 M24.5,4.1 h6.5" stroke="#b0b0b0" stroke-width="1"/></g>
<g transform="rotate(90)"><rect x="6" y="-1.8" width="18" height="3.6" fill="#a8a8a8" stroke="#333" stroke-width="0.6"/><rect x="23" y="-6.5" width="9.5" height="13" fill="#4a4a4a" stroke="#141414" stroke-width="0.9"/><path d="M24.5,-4 h6.5 M24.5,-1.3 h6.5 M24.5,1.4 h6.5 M24.5,4.1 h6.5" stroke="#b0b0b0" stroke-width="1"/></g>
<g transform="rotate(180)"><rect x="6" y="-1.8" width="18" height="3.6" fill="#a8a8a8" stroke="#333" stroke-width="0.6"/><rect x="23" y="-6.5" width="9.5" height="13" fill="#4a4a4a" stroke="#141414" stroke-width="0.9"/><path d="M24.5,-4 h6.5 M24.5,-1.3 h6.5 M24.5,1.4 h6.5 M24.5,4.1 h6.5" stroke="#b0b0b0" stroke-width="1"/></g>
<g transform="rotate(270)"><rect x="6" y="-1.8" width="18" height="3.6" fill="#a8a8a8" stroke="#333" stroke-width="0.6"/><rect x="23" y="-6.5" width="9.5" height="13" fill="#4a4a4a" stroke="#141414" stroke-width="0.9"/><path d="M24.5,-4 h6.5 M24.5,-1.3 h6.5 M24.5,1.4 h6.5 M24.5,4.1 h6.5" stroke="#b0b0b0" stroke-width="1"/></g>
<circle r="7.4" fill="#8e8e8e" stroke="#333" stroke-width="0.8"/><circle r="1.5" fill="#ddd"/>
</g>
<g transform="translate(686,358.9) rotate(22)">
<g transform="rotate(0)"><rect x="6" y="-1.8" width="18" height="3.6" fill="#a8a8a8" stroke="#333" stroke-width="0.6"/><rect x="23" y="-6.5" width="9.5" height="13" fill="#4a4a4a" stroke="#141414" stroke-width="0.9"/><path d="M24.5,-4 h6.5 M24.5,-1.3 h6.5 M24.5,1.4 h6.5 M24.5,4.1 h6.5" stroke="#b0b0b0" stroke-width="1"/></g>
<g transform="rotate(90)"><rect x="6" y="-1.8" width="18" height="3.6" fill="#a8a8a8" stroke="#333" stroke-width="0.6"/><rect x="23" y="-6.5" width="9.5" height="13" fill="#4a4a4a" stroke="#141414" stroke-width="0.9"/><path d="M24.5,-4 h6.5 M24.5,-1.3 h6.5 M24.5,1.4 h6.5 M24.5,4.1 h6.5" stroke="#b0b0b0" stroke-width="1"/></g>
<g transform="rotate(180)"><rect x="6" y="-1.8" width="18" height="3.6" fill="#a8a8a8" stroke="#333" stroke-width="0.6"/><rect x="23" y="-6.5" width="9.5" height="13" fill="#4a4a4a" stroke="#141414" stroke-width="0.9"/><path d="M24.5,-4 h6.5 M24.5,-1.3 h6.5 M24.5,1.4 h6.5 M24.5,4.1 h6.5" stroke="#b0b0b0" stroke-width="1"/></g>
<g transform="rotate(270)"><rect x="6" y="-1.8" width="18" height="3.6" fill="#a8a8a8" stroke="#333" stroke-width="0.6"/><rect x="23" y="-6.5" width="9.5" height="13" fill="#4a4a4a" stroke="#141414" stroke-width="0.9"/><path d="M24.5,-4 h6.5 M24.5,-1.3 h6.5 M24.5,1.4 h6.5 M24.5,4.1 h6.5" stroke="#b0b0b0" stroke-width="1"/></g>
<circle r="7.4" fill="#8e8e8e" stroke="#333" stroke-width="0.8"/><circle r="1.5" fill="#ddd"/>
</g>
<ellipse cx="616" cy="401" rx="14" ry="1.5" fill="#bbb"/><ellipse cx="686" cy="401" rx="14" ry="1.5" fill="#bbb"/>
<rect x="616.4" y="403.6" width="69.2" height="6" fill="url(#cyl)" stroke="#2a2a2a" stroke-width="0.6"/>
<polygon points="616.40,409.6 621.13,409.6 643.32,432 642.00,432" fill="#8c8c8c"/>
<polygon points="620.83,409.6 626.87,409.6 644.89,432 643.22,432" fill="#9e9e9e"/>
<polygon points="626.57,409.6 631.79,409.6 646.24,432 644.79,432" fill="#b4b4b4"/>
<polygon points="631.49,409.6 637.11,409.6 647.71,432 646.14,432" fill="#cbcbcb"/>
<polygon points="636.81,409.6 642.44,409.6 649.17,432 647.61,432" fill="#e3e3e3"/>
<polygon points="642.14,409.6 647.77,409.6 650.63,432 649.07,432" fill="#fdfdfd"/>
<polygon points="647.47,409.6 654.41,409.6 652.46,432 650.53,432" fill="#e4e4e4"/>
<polygon points="654.11,409.6 660.16,409.6 654.03,432 652.36,432" fill="#cacaca"/>
<polygon points="659.86,409.6 665.49,409.6 655.50,432 653.93,432" fill="#b2b2b2"/>
<polygon points="665.19,409.6 670.40,409.6 656.84,432 655.39,432" fill="#9a9a9a"/>
<polygon points="670.10,409.6 676.14,409.6 658.42,432 656.74,432" fill="#828282"/>
<polygon points="675.84,409.6 681.47,409.6 659.88,432 658.32,432" fill="#6c6c6c"/>
<polygon points="681.17,409.6 685.90,409.6 661.10,432 659.78,432" fill="#525252"/>
<polygon points="616.4,409.6 685.6,409.6 661,432 642,432" fill="none" stroke="#2a2a2a" stroke-width="0.6"/>
<rect x="642" y="431.5" width="19" height="8" fill="url(#cyl)" stroke="#2a2a2a" stroke-width="0.6"/>
<rect x="626.7" y="89" width="7.3" height="8" fill="url(#hcap)"/>
<rect x="625.9" y="65" width="10" height="6" fill="url(#hcap)" stroke="#333" stroke-width="0.5"/>
<rect x="626.1999999999999" y="71" width="9.4" height="10" fill="#8a8a8a" stroke="#333" stroke-width="0.5"/>
<rect x="628.6999999999999" y="72.5" width="4.4" height="7" fill="#d4d4d4" stroke="#666" stroke-width="0.4"/>
<rect x="625.9" y="81" width="10" height="6" fill="url(#hcap)" stroke="#333" stroke-width="0.5"/>
<rect x="625.9" y="87" width="10" height="1.6" fill="#3a3a3a"/>
<rect x="635.9" y="72.5" width="5" height="8" fill="#7a7a7a" stroke="#222" stroke-width="0.5"/>
<rect x="640.9" y="68.5" width="4.8" height="15" fill="#1a2ab8" rx="1.5" stroke="#0a0a40" stroke-width="0.5"/>
<rect x="641.9" y="71" width="2.4" height="9" fill="#3454f4" />
<rect x="645.5" y="66" width="7.2" height="19.5" fill="#2c2c2c" rx="1.5" stroke="#000" stroke-width="0.6"/>
<rect x="647.9" y="68.5" width="2.5" height="3" fill="#2038c0" rx="1"/>
<rect x="652.7" y="72.5" width="2" height="6" fill="#d8d8d8" />
<path d="M646.1,85 q0,6 2.8,6 q2.8,0 2.8,-6" fill="none" stroke="#222" stroke-width="0.8"/>
<path d="M608.9,100.8 C610.9,96.8 616.9,96.8 630.3,96.8 C643.7,96.8 649.7,96.8 651.7,100.8 L651.7,139 L608.9,139 Z" fill="url(#cyl)" stroke="#2a2a2a" stroke-width="0.7"/>
<path d="M608.9,100.8 C610.9,96.8 616.9,96.8 630.3,96.8 C643.7,96.8 649.7,96.8 651.7,100.8 C641.7,102.8 618.9,102.8 608.9,100.8Z" fill="#fff" fill-opacity="0.3"/>
<polygon points="608.90,139 611.94,139 627.68,168 627.00,168" fill="#8c8c8c"/>
<polygon points="611.64,139 615.49,139 628.42,168 627.58,168" fill="#9e9e9e"/>
<polygon points="615.19,139 618.53,139 629.06,168 628.32,168" fill="#b4b4b4"/>
<polygon points="618.23,139 621.83,139 629.75,168 628.96,168" fill="#cbcbcb"/>
<polygon points="621.53,139 625.12,139 630.45,168 629.65,168" fill="#e3e3e3"/>
<polygon points="624.82,139 628.42,139 631.14,168 630.35,168" fill="#fdfdfd"/>
<polygon points="628.12,139 632.53,139 632.00,168 631.04,168" fill="#e4e4e4"/>
<polygon points="632.23,139 636.08,139 632.75,168 631.90,168" fill="#cacaca"/>
<polygon points="635.78,139 639.37,139 633.45,168 632.65,168" fill="#b2b2b2"/>
<polygon points="639.07,139 642.41,139 634.08,168 633.35,168" fill="#9a9a9a"/>
<polygon points="642.11,139 645.97,139 634.83,168 633.98,168" fill="#828282"/>
<polygon points="645.67,139 649.26,139 635.52,168 634.73,168" fill="#6c6c6c"/>
<polygon points="648.96,139 652.00,139 636.10,168 635.42,168" fill="#525252"/>
<polygon points="608.9,139 651.7,139 636,168 627,168" fill="none" stroke="#2a2a2a" stroke-width="0.6"/>
<rect x="626.5" y="167" width="9" height="40" fill="url(#hcap)" stroke="#333" stroke-width="0.5"/>
<rect x="626" y="170.5" width="10" height="6" fill="url(#hcap)" stroke="#333" stroke-width="0.5"/>
<rect x="626.3" y="176.5" width="9.4" height="10" fill="#8a8a8a" stroke="#333" stroke-width="0.5"/>
<rect x="628.8" y="178.0" width="4.4" height="7" fill="#d4d4d4" stroke="#666" stroke-width="0.4"/>
<rect x="626" y="186.5" width="10" height="6" fill="url(#hcap)" stroke="#333" stroke-width="0.5"/>
<rect x="626" y="192.5" width="10" height="1.6" fill="#3a3a3a"/>
<rect x="636.0" y="178.0" width="5" height="8" fill="#7a7a7a" stroke="#222" stroke-width="0.5"/>
<rect x="641.0" y="174.0" width="4.8" height="15" fill="#1a2ab8" rx="1.5" stroke="#0a0a40" stroke-width="0.5"/>
<rect x="642.0" y="176.5" width="2.4" height="9" fill="#3454f4" />
<rect x="645.6" y="171.5" width="7.2" height="19.5" fill="#2c2c2c" rx="1.5" stroke="#000" stroke-width="0.6"/>
<rect x="648.0" y="174.0" width="2.5" height="3" fill="#2038c0" rx="1"/>
<rect x="652.8" y="178.0" width="2" height="6" fill="#d8d8d8" />
<path d="M646.2,190.5 q0,6 2.8,6 q2.8,0 2.8,-6" fill="none" stroke="#222" stroke-width="0.8"/>
<rect x="596.6" y="153.4" width="9.9" height="52" fill="url(#hcap)" stroke="#333" stroke-width="0.5"/>
<rect x="596.7" y="153.6" width="10" height="11.8" fill="url(#hcap)" stroke="#333" stroke-width="0.5"/>
<rect x="596.7" y="165.4" width="10" height="2" fill="#3a3a3a"/>
<rect x="596.6" y="169" width="10" height="6" fill="url(#hcap)" stroke="#333" stroke-width="0.5"/>
<rect x="596.9" y="175" width="9.4" height="10" fill="#8a8a8a" stroke="#333" stroke-width="0.5"/>
<rect x="599.4" y="176.5" width="4.4" height="7" fill="#d4d4d4" stroke="#666" stroke-width="0.4"/>
<rect x="596.6" y="185" width="10" height="6" fill="url(#hcap)" stroke="#333" stroke-width="0.5"/>
<rect x="596.6" y="191" width="10" height="1.6" fill="#3a3a3a"/>
<rect x="591.6" y="176.5" width="5" height="8" fill="#7a7a7a" stroke="#222" stroke-width="0.5"/>
<rect x="586.8" y="172.5" width="4.8" height="15" fill="#1a2ab8" rx="1.5" stroke="#0a0a40" stroke-width="0.5"/>
<rect x="588.2" y="175" width="2.4" height="9" fill="#3454f4" />
<rect x="579.8" y="170" width="7.2" height="19.5" fill="#2c2c2c" rx="1.5" stroke="#000" stroke-width="0.6"/>
<rect x="582.1" y="172.5" width="2.5" height="3" fill="#2038c0" rx="1"/>
<rect x="577.8" y="176.5" width="2" height="6" fill="#d8d8d8" />
<path d="M580.8000000000001,189 q0,6 2.8,6 q2.8,0 2.8,-6" fill="none" stroke="#222" stroke-width="0.8"/>
<path d="M584.4,208 C586.4,204 592.4,204 616.9,204 C641.4,204 647.4,204 649.4,208 L649.4,243 L584.4,243 Z" fill="url(#cyl)" stroke="#2a2a2a" stroke-width="0.7"/>
<path d="M584.4,208 C586.4,204 592.4,204 616.9,204 C641.4,204 647.4,204 649.4,208 C639.4,210 594.4,210 584.4,208Z" fill="#fff" fill-opacity="0.3"/>
<polygon points="584.40,243 588.86,243 613.06,264.6 612.00,264.6" fill="#8c8c8c"/>
<polygon points="588.56,243 594.25,243 614.31,264.6 612.96,264.6" fill="#9e9e9e"/>
<polygon points="593.95,243 598.87,243 615.37,264.6 614.21,264.6" fill="#b4b4b4"/>
<polygon points="598.57,243 603.87,243 616.52,264.6 615.27,264.6" fill="#cbcbcb"/>
<polygon points="603.57,243 608.88,243 617.68,264.6 616.42,264.6" fill="#e3e3e3"/>
<polygon points="608.58,243 613.88,243 618.84,264.6 617.58,264.6" fill="#fdfdfd"/>
<polygon points="613.59,243 620.12,243 620.27,264.6 618.74,264.6" fill="#e4e4e4"/>
<polygon points="619.82,243 625.52,243 621.52,264.6 620.17,264.6" fill="#cacaca"/>
<polygon points="625.22,243 630.52,243 622.68,264.6 621.42,264.6" fill="#b2b2b2"/>
<polygon points="630.23,243 635.14,243 623.74,264.6 622.58,264.6" fill="#9a9a9a"/>
<polygon points="634.84,243 640.53,243 624.99,264.6 623.64,264.6" fill="#828282"/>
<polygon points="640.24,243 645.54,243 626.14,264.6 624.88,264.6" fill="#6c6c6c"/>
<polygon points="645.24,243 649.70,243 627.10,264.6 626.04,264.6" fill="#525252"/>
<polygon points="584.4,243 649.4,243 627,264.6 612,264.6" fill="none" stroke="#2a2a2a" stroke-width="0.6"/>
<rect x="612.2" y="285" width="9" height="22" fill="url(#hcap)" stroke="#333" stroke-width="0.5"/>
<rect x="611.7" y="264.8" width="10" height="6" fill="url(#hcap)" stroke="#333" stroke-width="0.5"/>
<rect x="612.0" y="270.8" width="9.4" height="10" fill="#8a8a8a" stroke="#333" stroke-width="0.5"/>
<rect x="614.5" y="272.3" width="4.4" height="7" fill="#d4d4d4" stroke="#666" stroke-width="0.4"/>
<rect x="611.7" y="280.8" width="10" height="6" fill="url(#hcap)" stroke="#333" stroke-width="0.5"/>
<rect x="611.7" y="286.8" width="10" height="1.6" fill="#3a3a3a"/>
<rect x="621.7" y="272.3" width="5" height="8" fill="#7a7a7a" stroke="#222" stroke-width="0.5"/>
<rect x="626.7" y="268.3" width="4.8" height="15" fill="#1a2ab8" rx="1.5" stroke="#0a0a40" stroke-width="0.5"/>
<rect x="627.7" y="270.8" width="2.4" height="9" fill="#3454f4" />
<rect x="631.3" y="265.8" width="7.2" height="19.5" fill="#2c2c2c" rx="1.5" stroke="#000" stroke-width="0.6"/>
<rect x="633.7" y="268.3" width="2.5" height="3" fill="#2038c0" rx="1"/>
<rect x="638.5" y="272.3" width="2" height="6" fill="#d8d8d8" />
<path d="M631.9000000000001,284.8 q0,6 2.8,6 q2.8,0 2.8,-6" fill="none" stroke="#222" stroke-width="0.8"/>
<rect x="706.5" y="150.7" width="13.2" height="40" fill="url(#hcap)" stroke="#333" stroke-width="0.5"/>
<path d="M652.7,192.7 C654.7,188.7 660.7,188.7 687.85,188.7 C715,188.7 721,188.7 723,192.7 L723,244.8 L652.7,244.8 Z" fill="url(#cyl)" stroke="#2a2a2a" stroke-width="0.7"/>
<path d="M652.7,192.7 C654.7,188.7 660.7,188.7 687.85,188.7 C715,188.7 721,188.7 723,192.7 C713,194.7 662.7,194.7 652.7,192.7Z" fill="#fff" fill-opacity="0.3"/>
<polygon points="652.70,244.8 657.50,244.8 683.06,279.4 682.00,279.4" fill="#8c8c8c"/>
<polygon points="657.20,244.8 663.33,244.8 684.31,279.4 682.96,279.4" fill="#9e9e9e"/>
<polygon points="663.03,244.8 668.33,244.8 685.37,279.4 684.21,279.4" fill="#b4b4b4"/>
<polygon points="668.03,244.8 673.74,244.8 686.52,279.4 685.27,279.4" fill="#cbcbcb"/>
<polygon points="673.44,244.8 679.15,244.8 687.68,279.4 686.42,279.4" fill="#e3e3e3"/>
<polygon points="678.85,244.8 684.56,244.8 688.84,279.4 687.58,279.4" fill="#fdfdfd"/>
<polygon points="684.26,244.8 691.31,244.8 690.27,279.4 688.74,279.4" fill="#e4e4e4"/>
<polygon points="691.01,244.8 697.15,244.8 691.52,279.4 690.17,279.4" fill="#cacaca"/>
<polygon points="696.85,244.8 702.56,244.8 692.68,279.4 691.42,279.4" fill="#b2b2b2"/>
<polygon points="702.26,244.8 707.55,244.8 693.74,279.4 692.58,279.4" fill="#9a9a9a"/>
<polygon points="707.25,244.8 713.39,244.8 694.99,279.4 693.64,279.4" fill="#828282"/>
<polygon points="713.09,244.8 718.80,244.8 696.14,279.4 694.88,279.4" fill="#6c6c6c"/>
<polygon points="718.50,244.8 723.30,244.8 697.10,279.4 696.04,279.4" fill="#525252"/>
<polygon points="652.7,244.8 723,244.8 697,279.4 682,279.4" fill="none" stroke="#2a2a2a" stroke-width="0.6"/>
<rect x="683" y="282.4" width="10" height="6" fill="url(#hcap)" stroke="#333" stroke-width="0.5"/>
<rect x="683.3" y="288.4" width="9.4" height="10" fill="#8a8a8a" stroke="#333" stroke-width="0.5"/>
<rect x="685.8" y="289.9" width="4.4" height="7" fill="#d4d4d4" stroke="#666" stroke-width="0.4"/>
<rect x="683" y="298.4" width="10" height="6" fill="url(#hcap)" stroke="#333" stroke-width="0.5"/>
<rect x="683" y="304.4" width="10" height="1.6" fill="#3a3a3a"/>
<rect x="693.0" y="289.9" width="5" height="8" fill="#7a7a7a" stroke="#222" stroke-width="0.5"/>
<rect x="698.0" y="285.9" width="4.8" height="15" fill="#1a2ab8" rx="1.5" stroke="#0a0a40" stroke-width="0.5"/>
<rect x="699.0" y="288.4" width="2.4" height="9" fill="#3454f4" />
<rect x="702.6" y="283.4" width="7.2" height="19.5" fill="#2c2c2c" rx="1.5" stroke="#000" stroke-width="0.6"/>
<rect x="705.0" y="285.9" width="2.5" height="3" fill="#2038c0" rx="1"/>
<rect x="709.8" y="289.9" width="2" height="6" fill="#d8d8d8" />
<path d="M703.2,302.4 q0,6 2.8,6 q2.8,0 2.8,-6" fill="none" stroke="#222" stroke-width="0.8"/>
<rect x="528" y="88.4" width="73.0" height="27.1" fill="#fbfbf6"/>
<rect x="528" y="88.4" width="72.0" height="25.1" fill="#b0ac9c"/>
<rect x="529.8" y="89.7" width="69.9" height="23.6" fill="#000"/>
<path d="M587.45,90.60 L597.95,90.60 L594.53,93.60 L590.03,93.60ZM586.82,91.15 L589.40,94.15 L588.58,100.05 L585.48,100.80ZM585.32,101.90 L588.22,102.65 L587.40,108.55 L583.98,111.55ZM598.42,91.15 L597.08,100.80 L594.18,100.05 L595.00,94.15ZM596.92,101.90 L595.58,111.55 L593.00,108.55 L593.82,102.65ZM584.45,112.10 L594.95,112.10 L592.37,109.10 L587.87,109.10ZM571.45,90.60 L581.95,90.60 L578.53,93.60 L574.03,93.60ZM570.82,91.15 L573.40,94.15 L572.58,100.05 L569.48,100.80ZM569.32,101.90 L572.22,102.65 L571.40,108.55 L567.98,111.55ZM582.42,91.15 L581.08,100.80 L578.18,100.05 L579.00,94.15ZM580.92,101.90 L579.58,111.55 L577.00,108.55 L577.82,102.65ZM568.45,112.10 L578.95,112.10 L576.37,109.10 L571.87,109.10ZM563.3,109.5 h2.6 v2.6 h-2.6ZM550.95,90.60 L561.45,90.60 L558.03,93.60 L553.53,93.60ZM550.32,91.15 L552.90,94.15 L552.08,100.05 L548.98,100.80ZM548.82,101.90 L551.72,102.65 L550.90,108.55 L547.48,111.55ZM561.92,91.15 L560.58,100.80 L557.68,100.05 L558.50,94.15ZM560.42,101.90 L559.08,111.55 L556.50,108.55 L557.32,102.65ZM547.95,112.10 L558.45,112.10 L555.87,109.10 L551.37,109.10ZM534.95,90.60 L545.45,90.60 L542.03,93.60 L537.53,93.60ZM534.32,91.15 L536.90,94.15 L536.08,100.05 L532.98,100.80ZM532.82,101.90 L535.72,102.65 L534.90,108.55 L531.48,111.55ZM545.92,91.15 L544.58,100.80 L541.68,100.05 L542.50,94.15ZM544.42,101.90 L543.08,111.55 L540.50,108.55 L541.32,102.65ZM531.95,112.10 L542.45,112.10 L539.87,109.10 L535.37,109.10Z" fill="#d44c0a" stroke="#4a1800" stroke-width="0.6"/>
<rect x="528" y="117" width="73.0" height="27.0" fill="#fbfbf6"/>
<rect x="528" y="117" width="72.0" height="25.0" fill="#b0ac9c"/>
<rect x="529.8" y="118.3" width="69.9" height="23.5" fill="#000"/>
<path d="M587.45,119.20 L597.95,119.20 L594.53,122.20 L590.03,122.20ZM586.82,119.75 L589.40,122.75 L588.58,128.65 L585.48,129.40ZM585.32,130.50 L588.22,131.25 L587.40,137.15 L583.98,140.15ZM598.42,119.75 L597.08,129.40 L594.18,128.65 L595.00,122.75ZM596.92,130.50 L595.58,140.15 L593.00,137.15 L593.82,131.25ZM584.45,140.70 L594.95,140.70 L592.37,137.70 L587.87,137.70ZM571.45,119.20 L581.95,119.20 L578.53,122.20 L574.03,122.20ZM570.82,119.75 L573.40,122.75 L572.58,128.65 L569.48,129.40ZM569.32,130.50 L572.22,131.25 L571.40,137.15 L567.98,140.15ZM582.42,119.75 L581.08,129.40 L578.18,128.65 L579.00,122.75ZM580.92,130.50 L579.58,140.15 L577.00,137.15 L577.82,131.25ZM568.45,140.70 L578.95,140.70 L576.37,137.70 L571.87,137.70ZM563.3,138.1 h2.6 v2.6 h-2.6ZM550.95,119.20 L561.45,119.20 L558.03,122.20 L553.53,122.20ZM550.32,119.75 L552.90,122.75 L552.08,128.65 L548.98,129.40ZM548.82,130.50 L551.72,131.25 L550.90,137.15 L547.48,140.15ZM561.92,119.75 L560.58,129.40 L557.68,128.65 L558.50,122.75ZM560.42,130.50 L559.08,140.15 L556.50,137.15 L557.32,131.25ZM547.95,140.70 L558.45,140.70 L555.87,137.70 L551.37,137.70ZM534.95,119.20 L545.45,119.20 L542.03,122.20 L537.53,122.20ZM534.32,119.75 L536.90,122.75 L536.08,128.65 L532.98,129.40ZM532.82,130.50 L535.72,131.25 L534.90,137.15 L531.48,140.15ZM545.92,119.75 L544.58,129.40 L541.68,128.65 L542.50,122.75ZM544.42,130.50 L543.08,140.15 L540.50,137.15 L541.32,131.25ZM531.95,140.70 L542.45,140.70 L539.87,137.70 L535.37,137.70Z" fill="#12c212" stroke="#054005" stroke-width="0.6"/>
<rect x="482" y="195" width="73.0" height="27.0" fill="#fbfbf6"/>
<rect x="482" y="195" width="72.0" height="25.0" fill="#b0ac9c"/>
<rect x="483.8" y="196.3" width="69.9" height="23.5" fill="#000"/>
<path d="M541.45,197.20 L551.95,197.20 L548.53,200.20 L544.03,200.20ZM540.82,197.75 L543.40,200.75 L542.58,206.65 L539.48,207.40ZM539.32,208.50 L542.22,209.25 L541.40,215.15 L537.98,218.15ZM552.42,197.75 L551.08,207.40 L548.18,206.65 L549.00,200.75ZM550.92,208.50 L549.58,218.15 L547.00,215.15 L547.82,209.25ZM538.45,218.70 L548.95,218.70 L546.37,215.70 L541.87,215.70ZM533.3,216.1 h2.6 v2.6 h-2.6ZM520.95,197.20 L531.45,197.20 L528.03,200.20 L523.53,200.20ZM520.32,197.75 L522.90,200.75 L522.08,206.65 L518.98,207.40ZM518.82,208.50 L521.72,209.25 L520.90,215.15 L517.48,218.15ZM531.92,197.75 L530.58,207.40 L527.68,206.65 L528.50,200.75ZM530.42,208.50 L529.08,218.15 L526.50,215.15 L527.32,209.25ZM517.95,218.70 L528.45,218.70 L525.87,215.70 L521.37,215.70ZM504.95,197.20 L515.45,197.20 L512.03,200.20 L507.53,200.20ZM504.32,197.75 L506.90,200.75 L506.08,206.65 L502.98,207.40ZM502.82,208.50 L505.72,209.25 L504.90,215.15 L501.48,218.15ZM515.92,197.75 L514.58,207.40 L511.68,206.65 L512.50,200.75ZM514.42,208.50 L513.08,218.15 L510.50,215.15 L511.32,209.25ZM501.95,218.70 L512.45,218.70 L509.87,215.70 L505.37,215.70ZM488.95,197.20 L499.45,197.20 L496.03,200.20 L491.53,200.20ZM488.32,197.75 L490.90,200.75 L490.08,206.65 L486.98,207.40ZM486.82,208.50 L489.72,209.25 L488.90,215.15 L485.48,218.15ZM499.92,197.75 L498.58,207.40 L495.68,206.65 L496.50,200.75ZM498.42,208.50 L497.08,218.15 L494.50,215.15 L495.32,209.25ZM485.95,218.70 L496.45,218.70 L493.87,215.70 L489.37,215.70Z" fill="#d44c0a" stroke="#4a1800" stroke-width="0.6"/>
<rect x="482" y="223.3" width="73.0" height="27.2" fill="#fbfbf6"/>
<rect x="482" y="223.3" width="72.0" height="25.2" fill="#b0ac9c"/>
<rect x="483.8" y="224.6" width="69.9" height="23.7" fill="#000"/>
<path d="M541.45,225.50 L551.95,225.50 L548.53,228.50 L544.03,228.50ZM540.82,226.05 L543.40,229.05 L542.58,234.95 L539.48,235.70ZM539.32,236.80 L542.22,237.55 L541.40,243.45 L537.98,246.45ZM552.42,226.05 L551.08,235.70 L548.18,234.95 L549.00,229.05ZM550.92,236.80 L549.58,246.45 L547.00,243.45 L547.82,237.55ZM538.45,247.00 L548.95,247.00 L546.37,244.00 L541.87,244.00ZM533.3,244.4 h2.6 v2.6 h-2.6ZM520.95,225.50 L531.45,225.50 L528.03,228.50 L523.53,228.50ZM520.32,226.05 L522.90,229.05 L522.08,234.95 L518.98,235.70ZM518.82,236.80 L521.72,237.55 L520.90,243.45 L517.48,246.45ZM531.92,226.05 L530.58,235.70 L527.68,234.95 L528.50,229.05ZM530.42,236.80 L529.08,246.45 L526.50,243.45 L527.32,237.55ZM517.95,247.00 L528.45,247.00 L525.87,244.00 L521.37,244.00ZM504.95,225.50 L515.45,225.50 L512.03,228.50 L507.53,228.50ZM504.32,226.05 L506.90,229.05 L506.08,234.95 L502.98,235.70ZM502.82,236.80 L505.72,237.55 L504.90,243.45 L501.48,246.45ZM515.92,226.05 L514.58,235.70 L511.68,234.95 L512.50,229.05ZM514.42,236.80 L513.08,246.45 L510.50,243.45 L511.32,237.55ZM501.95,247.00 L512.45,247.00 L509.87,244.00 L505.37,244.00ZM488.95,225.50 L499.45,225.50 L496.03,228.50 L491.53,228.50ZM488.32,226.05 L490.90,229.05 L490.08,234.95 L486.98,235.70ZM486.82,236.80 L489.72,237.55 L488.90,243.45 L485.48,246.45ZM499.92,226.05 L498.58,235.70 L495.68,234.95 L496.50,229.05ZM498.42,236.80 L497.08,246.45 L494.50,243.45 L495.32,237.55ZM485.95,247.00 L496.45,247.00 L493.87,244.00 L489.37,244.00Z" fill="#12c212" stroke="#054005" stroke-width="0.6"/>
<rect x="720" y="275" width="73.0" height="27.0" fill="#fbfbf6"/>
<rect x="720" y="275" width="72.0" height="25.0" fill="#b0ac9c"/>
<rect x="721.8" y="276.3" width="69.9" height="23.5" fill="#000"/>
<path d="M779.45,277.20 L789.95,277.20 L786.53,280.20 L782.03,280.20ZM778.82,277.75 L781.40,280.75 L780.58,286.65 L777.48,287.40ZM777.32,288.50 L780.22,289.25 L779.40,295.15 L775.98,298.15ZM790.42,277.75 L789.08,287.40 L786.18,286.65 L787.00,280.75ZM788.92,288.50 L787.58,298.15 L785.00,295.15 L785.82,289.25ZM776.45,298.70 L786.95,298.70 L784.37,295.70 L779.87,295.70ZM771.3,296.1 h2.6 v2.6 h-2.6ZM758.95,277.20 L769.45,277.20 L766.03,280.20 L761.53,280.20ZM758.32,277.75 L760.90,280.75 L760.08,286.65 L756.98,287.40ZM756.82,288.50 L759.72,289.25 L758.90,295.15 L755.48,298.15ZM769.92,277.75 L768.58,287.40 L765.68,286.65 L766.50,280.75ZM768.42,288.50 L767.08,298.15 L764.50,295.15 L765.32,289.25ZM755.95,298.70 L766.45,298.70 L763.87,295.70 L759.37,295.70ZM742.95,277.20 L753.45,277.20 L750.03,280.20 L745.53,280.20ZM742.32,277.75 L744.90,280.75 L744.08,286.65 L740.98,287.40ZM740.82,288.50 L743.72,289.25 L742.90,295.15 L739.48,298.15ZM753.92,277.75 L752.58,287.40 L749.68,286.65 L750.50,280.75ZM752.42,288.50 L751.08,298.15 L748.50,295.15 L749.32,289.25ZM739.95,298.70 L750.45,298.70 L747.87,295.70 L743.37,295.70ZM726.95,277.20 L737.45,277.20 L734.03,280.20 L729.53,280.20ZM726.32,277.75 L728.90,280.75 L728.08,286.65 L724.98,287.40ZM724.82,288.50 L727.72,289.25 L726.90,295.15 L723.48,298.15ZM737.92,277.75 L736.58,287.40 L733.68,286.65 L734.50,280.75ZM736.42,288.50 L735.08,298.15 L732.50,295.15 L733.32,289.25ZM723.95,298.70 L734.45,298.70 L731.87,295.70 L727.37,295.70Z" fill="#d44c0a" stroke="#4a1800" stroke-width="0.6"/>
<rect x="720" y="305" width="73.0" height="27.0" fill="#fbfbf6"/>
<rect x="720" y="305" width="72.0" height="25.0" fill="#b0ac9c"/>
<rect x="721.8" y="306.3" width="69.9" height="23.5" fill="#000"/>
<path d="M779.45,307.20 L789.95,307.20 L786.53,310.20 L782.03,310.20ZM778.82,307.75 L781.40,310.75 L780.58,316.65 L777.48,317.40ZM777.32,318.50 L780.22,319.25 L779.40,325.15 L775.98,328.15ZM790.42,307.75 L789.08,317.40 L786.18,316.65 L787.00,310.75ZM788.92,318.50 L787.58,328.15 L785.00,325.15 L785.82,319.25ZM776.45,328.70 L786.95,328.70 L784.37,325.70 L779.87,325.70ZM771.3,326.1 h2.6 v2.6 h-2.6ZM758.95,307.20 L769.45,307.20 L766.03,310.20 L761.53,310.20ZM758.32,307.75 L760.90,310.75 L760.08,316.65 L756.98,317.40ZM756.82,318.50 L759.72,319.25 L758.90,325.15 L755.48,328.15ZM769.92,307.75 L768.58,317.40 L765.68,316.65 L766.50,310.75ZM768.42,318.50 L767.08,328.15 L764.50,325.15 L765.32,319.25ZM755.95,328.70 L766.45,328.70 L763.87,325.70 L759.37,325.70ZM742.95,307.20 L753.45,307.20 L750.03,310.20 L745.53,310.20ZM742.32,307.75 L744.90,310.75 L744.08,316.65 L740.98,317.40ZM740.82,318.50 L743.72,319.25 L742.90,325.15 L739.48,328.15ZM753.92,307.75 L752.58,317.40 L749.68,316.65 L750.50,310.75ZM752.42,318.50 L751.08,328.15 L748.50,325.15 L749.32,319.25ZM739.95,328.70 L750.45,328.70 L747.87,325.70 L743.37,325.70ZM726.95,307.20 L737.45,307.20 L734.03,310.20 L729.53,310.20ZM726.32,307.75 L728.90,310.75 L728.08,316.65 L724.98,317.40ZM724.82,318.50 L727.72,319.25 L726.90,325.15 L723.48,328.15ZM737.92,307.75 L736.58,317.40 L733.68,316.65 L734.50,310.75ZM736.42,318.50 L735.08,328.15 L732.50,325.15 L733.32,319.25ZM723.95,328.70 L734.45,328.70 L731.87,325.70 L727.37,325.70Z" fill="#12c212" stroke="#054005" stroke-width="0.6"/>
<rect x="936.6" y="49" width="36.6" height="15.8" rx="3" fill="url(#hcap)" stroke="#444" stroke-width="0.7"/>
<rect x="942.8" y="64.8" width="24.8" height="5.2" fill="url(#hcap)" stroke="#444" stroke-width="0.6"/>
<path d="M911.8,76.5 L918,70.8 L994,70.8 L1000.2,76.5 L1000.2,369.5 L911.8,369.5Z" fill="url(#cyl)" stroke="#333" stroke-width="0.6"/>
<path d="M911.8,76.5 L918,70.8 L994,70.8 L1000.2,76.5Z" fill="#707070" fill-opacity="0.18"/>
<line x1="912" y1="76.8" x2="1000" y2="76.8" stroke="#fff" stroke-opacity="0.35" stroke-width="0.8"/>
<path d="M911.8,76.5 L918,70.8 L994,70.8 L1000.2,76.5" fill="none" stroke="#222" stroke-width="0.8"/>
<line x1="912" y1="117" x2="1000" y2="117" stroke="#fff" stroke-opacity="0.15" stroke-width="1"/>
<polygon points="911.80,369.5 917.76,369.5 948.31,409.5 947.20,409.5" fill="#8c8c8c"/>
<polygon points="917.46,369.5 925.09,369.5 949.62,409.5 948.21,409.5" fill="#9e9e9e"/>
<polygon points="924.79,369.5 931.37,369.5 950.74,409.5 949.52,409.5" fill="#b4b4b4"/>
<polygon points="931.07,369.5 938.18,369.5 951.96,409.5 950.64,409.5" fill="#cbcbcb"/>
<polygon points="937.88,369.5 944.98,369.5 953.18,409.5 951.86,409.5" fill="#e3e3e3"/>
<polygon points="944.68,369.5 951.79,369.5 954.39,409.5 953.08,409.5" fill="#fdfdfd"/>
<polygon points="951.49,369.5 960.28,369.5 955.91,409.5 954.29,409.5" fill="#e4e4e4"/>
<polygon points="959.98,369.5 967.62,369.5 957.22,409.5 955.81,409.5" fill="#cacaca"/>
<polygon points="967.32,369.5 974.42,369.5 958.44,409.5 957.12,409.5" fill="#b2b2b2"/>
<polygon points="974.12,369.5 980.70,369.5 959.56,409.5 958.34,409.5" fill="#9a9a9a"/>
<polygon points="980.40,369.5 988.04,369.5 960.87,409.5 959.46,409.5" fill="#828282"/>
<polygon points="987.74,369.5 994.84,369.5 962.09,409.5 960.77,409.5" fill="#6c6c6c"/>
<polygon points="994.54,369.5 1000.50,369.5 963.10,409.5 961.99,409.5" fill="#525252"/>
<polygon points="911.8,369.5 1000.2,369.5 963,409.5 947.2,409.5" fill="none" stroke="#333" stroke-width="0.6"/>
<rect x="947.2" y="409.5" width="15.8" height="22" fill="url(#hcap)" stroke="#333" stroke-width="0.6"/>
<rect x="922.6" y="392" width="3.4" height="95" fill="url(#leg)" stroke="#333" stroke-width="0.4"/>
<path d="M920.6,487 L928.0,487 L932.6,494 L916.6,494Z" fill="#aaa" stroke="#333" stroke-width="0.5"/>
<rect x="988" y="392" width="3.4" height="95" fill="url(#leg)" stroke="#333" stroke-width="0.4"/>
<path d="M986,487 L993.4,487 L998,494 L982,494Z" fill="#aaa" stroke="#333" stroke-width="0.5"/>
<line x1="926" y1="470" x2="988" y2="400" stroke="#999" stroke-width="2"/>
<line x1="926" y1="400" x2="988" y2="470" stroke="#999" stroke-width="2"/>
<g transform="translate(706.2,134.8) rotate(51.39)">
<rect x="0" y="-10" width="154.5" height="20" fill="url(#tube)" stroke="#555" stroke-width="0.5"/>
<rect x="0" y="-10" width="154.5" height="20" fill="url(#vdith)"/>
<ellipse cx="0" cy="0" rx="2.5" ry="10" fill="#d8d8d8" stroke="#666" stroke-width="0.5"/>
</g>
<g transform="translate(802.6,255.5) rotate(52.65)">
<line x1="0" y1="-10" x2="141.3" y2="-10" stroke="#7a6cb8" stroke-width="0.7"/>
<line x1="0" y1="10" x2="141.3" y2="10" stroke="#7a6cb8" stroke-width="0.7"/>
<g transform="translate(6.0,0) rotate(-52.65) scale(1.12)">
<path d="M0.5,-4 A6.5,6.5 0 0 1 6.5,7 L0.5,4Z" fill="#b8b8b8" stroke="#8c8c8c" stroke-width="0.4"/>
<path d="M2,-7 L3,7 L-8,7.5 L-7,4Z" fill="#cdcdcd" stroke="#9a9a9a" stroke-width="0.4"/>
</g>
<g transform="translate(23.6,0) rotate(-52.65) scale(1.12)">
<path d="M0.5,-4 A6.5,6.5 0 0 1 6.5,7 L0.5,4Z" fill="#b8b8b8" stroke="#8c8c8c" stroke-width="0.4"/>
<path d="M2,-7 L3,7 L-8,7.5 L-7,4Z" fill="#cdcdcd" stroke="#9a9a9a" stroke-width="0.4"/>
</g>
<g transform="translate(41.2,0) rotate(-52.65) scale(1.12)">
<path d="M0.5,-4 A6.5,6.5 0 0 1 6.5,7 L0.5,4Z" fill="#b8b8b8" stroke="#8c8c8c" stroke-width="0.4"/>
<path d="M2,-7 L3,7 L-8,7.5 L-7,4Z" fill="#cdcdcd" stroke="#9a9a9a" stroke-width="0.4"/>
</g>
<g transform="translate(58.8,0) rotate(-52.65) scale(1.12)">
<path d="M0.5,-4 A6.5,6.5 0 0 1 6.5,7 L0.5,4Z" fill="#b8b8b8" stroke="#8c8c8c" stroke-width="0.4"/>
<path d="M2,-7 L3,7 L-8,7.5 L-7,4Z" fill="#cdcdcd" stroke="#9a9a9a" stroke-width="0.4"/>
</g>
<g transform="translate(76.4,0) rotate(-52.65) scale(1.12)">
<path d="M0.5,-4 A6.5,6.5 0 0 1 6.5,7 L0.5,4Z" fill="#b8b8b8" stroke="#8c8c8c" stroke-width="0.4"/>
<path d="M2,-7 L3,7 L-8,7.5 L-7,4Z" fill="#cdcdcd" stroke="#9a9a9a" stroke-width="0.4"/>
</g>
<g transform="translate(94.0,0) rotate(-52.65) scale(1.12)">
<path d="M0.5,-4 A6.5,6.5 0 0 1 6.5,7 L0.5,4Z" fill="#b8b8b8" stroke="#8c8c8c" stroke-width="0.4"/>
<path d="M2,-7 L3,7 L-8,7.5 L-7,4Z" fill="#cdcdcd" stroke="#9a9a9a" stroke-width="0.4"/>
</g>
<g transform="translate(111.6,0) rotate(-52.65) scale(1.12)">
<path d="M0.5,-4 A6.5,6.5 0 0 1 6.5,7 L0.5,4Z" fill="#b8b8b8" stroke="#8c8c8c" stroke-width="0.4"/>
<path d="M2,-7 L3,7 L-8,7.5 L-7,4Z" fill="#cdcdcd" stroke="#9a9a9a" stroke-width="0.4"/>
</g>
<g transform="translate(129.2,0) rotate(-52.65) scale(1.12)">
<path d="M0.5,-4 A6.5,6.5 0 0 1 6.5,7 L0.5,4Z" fill="#b8b8b8" stroke="#8c8c8c" stroke-width="0.4"/>
<path d="M2,-7 L3,7 L-8,7.5 L-7,4Z" fill="#cdcdcd" stroke="#9a9a9a" stroke-width="0.4"/>
</g>
<rect x="0" y="-1.5" width="141.3" height="3" fill="#ececec" stroke="#999" stroke-width="0.3"/>
</g>
<g transform="translate(888.3,367.8) rotate(53.00)">
<rect x="0" y="-10.2" width="118.8" height="20.4" fill="url(#tube2)" stroke="#555" stroke-width="0.5"/>
<rect x="0" y="-10.2" width="118.8" height="20.4" fill="url(#dith)"/>
</g>
<g transform="translate(959.8,462.7) rotate(53.00)">
<rect x="-1" y="-11" width="9" height="22" fill="#3aa03a" stroke="#134013" stroke-width="0.7"/>
<rect x="8" y="-8.5" width="24" height="17" fill="#d8f0d8" stroke="#134013" stroke-width="0.7"/>
<rect x="8" y="-8.5" width="24" height="17" fill="url(#gdith)"/>
<rect x="8" y="-11" width="6" height="7" fill="#4cb04c" stroke="#134013" stroke-width="0.5"/>
<rect x="21" y="3" width="7" height="8" fill="#4cb04c" stroke="#134013" stroke-width="0.5"/>
<rect x="30" y="-9" width="4" height="18" fill="#3aa03a" stroke="#134013" stroke-width="0.6"/>
</g>
<rect x="911.8" y="369.5" width="4.2" height="124" fill="url(#leg)" stroke="#333" stroke-width="0.5"/>
<path d="M908.8,493.5 L919.0,493.5 L923.8,499 L923.8,503 L903.8,503 L903.8,499Z" fill="url(#hcap)" stroke="#333" stroke-width="0.6"/>
<rect x="995.4" y="369.5" width="4.2" height="124" fill="url(#leg)" stroke="#333" stroke-width="0.5"/>
<path d="M992.4,493.5 L1002.6,493.5 L1007.4,499 L1007.4,503 L987.4,503 L987.4,499Z" fill="url(#hcap)" stroke="#333" stroke-width="0.6"/>
<rect x="0" y="-2.0" width="129.3" height="4" fill="url(#brace)" stroke="#333" stroke-width="0.5" transform="translate(916,381) rotate(52.10)"/>
<rect x="0" y="-2.0" width="129.6" height="4" fill="url(#brace)" stroke="#333" stroke-width="0.5" transform="translate(995.4,381) rotate(128.07)"/>
<path d="M808,477 V446 Q808,432 822,432 L833,432 L876.5,457.5 V477 Z" fill="#e86c00" stroke="#3a1800" stroke-width="0.8"/>
<rect x="808.3" y="459.5" width="22.7" height="2" fill="#d8d8d8" stroke="#333" stroke-width="0.4"/>
<rect x="808.5" y="461.5" width="22.3" height="7" fill="#a4a4a4" stroke="#333" stroke-width="0.5"/>
<rect x="808.3" y="468.5" width="22.7" height="2" fill="#e0e0e0" stroke="#333" stroke-width="0.4"/>
<rect x="808.5" y="470.5" width="22.3" height="5.5" fill="#a4a4a4" stroke="#333" stroke-width="0.5"/>
<rect x="831" y="461.8" width="17" height="14.2" fill="#707070" stroke="#333" stroke-width="0.6"/>
<circle cx="824" cy="448.3" r="13.2" fill="#e8e8e8" stroke="#555" stroke-width="0.8"/>
<circle cx="824" cy="448.3" r="10" fill="#e06a10" stroke="#444" stroke-width="0.6"/>
<g transform="translate(824,448.3)"><rect x="2" y="-1.3" width="8" height="2.6" fill="#b8b8b8" stroke="#333" stroke-width="0.4" transform="rotate(18)"/><rect x="2" y="-1.3" width="8" height="2.6" fill="#b8b8b8" stroke="#333" stroke-width="0.4" transform="rotate(54)"/><rect x="2" y="-1.3" width="8" height="2.6" fill="#b8b8b8" stroke="#333" stroke-width="0.4" transform="rotate(90)"/><rect x="2" y="-1.3" width="8" height="2.6" fill="#b8b8b8" stroke="#333" stroke-width="0.4" transform="rotate(126)"/><rect x="2" y="-1.3" width="8" height="2.6" fill="#b8b8b8" stroke="#333" stroke-width="0.4" transform="rotate(162)"/><rect x="2" y="-1.3" width="8" height="2.6" fill="#b8b8b8" stroke="#333" stroke-width="0.4" transform="rotate(198)"/><rect x="2" y="-1.3" width="8" height="2.6" fill="#b8b8b8" stroke="#333" stroke-width="0.4" transform="rotate(234)"/><rect x="2" y="-1.3" width="8" height="2.6" fill="#b8b8b8" stroke="#333" stroke-width="0.4" transform="rotate(270)"/><rect x="2" y="-1.3" width="8" height="2.6" fill="#b8b8b8" stroke="#333" stroke-width="0.4" transform="rotate(306)"/><rect x="2" y="-1.3" width="8" height="2.6" fill="#b8b8b8" stroke="#333" stroke-width="0.4" transform="rotate(342)"/></g>
<circle cx="824" cy="448.3" r="4.2" fill="#d4d4d4" stroke="#555" stroke-width="0.5"/>
<circle cx="869.3" cy="468" r="7" fill="#6c6c6c" stroke="#333" stroke-width="0.7"/>
<circle cx="869.3" cy="468" r="3.5" fill="none" stroke="#999" stroke-width="0.8" stroke-dasharray="1 1"/>
<rect x="807.5" y="476.3" width="70" height="3.6" fill="#dcdcdc" stroke="#333" stroke-width="0.6"/>
<rect x="850" y="475" width="6" height="4" fill="#bbb" stroke="#333" stroke-width="0.5"/>
<rect x="797" y="481" width="87" height="27.5" rx="6" ry="10" fill="url(#tank)" stroke="#1e3a3a" stroke-width="0.8"/>
<rect x="819.7" y="490.8" width="41.1" height="11.2" fill="#ffff00"/>
<rect x="883" y="499" width="3" height="2.5" fill="#ddd"/>
<circle cx="807" cy="512.8" r="6.8" fill="#f0f0f0" stroke="#333" stroke-width="0.7"/>
<circle cx="807" cy="512.8" r="5" fill="#333"/>
<path d="M802.5,512.8 H811.5 M807,508.3 V517.3 M803.8,509.6 L810.2,516 M810.2,509.6 L803.8,516" stroke="#bbb" stroke-width="0.8"/>
<circle cx="807" cy="512.8" r="1.5" fill="#eee"/>
<circle cx="872.9" cy="512.8" r="6.8" fill="#f0f0f0" stroke="#333" stroke-width="0.7"/>
<circle cx="872.9" cy="512.8" r="5" fill="#333"/>
<path d="M868.4,512.8 H877.4 M872.9,508.3 V517.3 M869.6999999999999,509.6 L876.1,516 M876.1,509.6 L869.6999999999999,516" stroke="#bbb" stroke-width="0.8"/>
<circle cx="872.9" cy="512.8" r="1.5" fill="#eee"/>
    </svg>
    <div class="btn" style="left:14px;top:8px">Cân cốt liệu</div>
    <div class="btn g" style="left:104px;top:8px">Cân Xi măng</div>
    <div class="btn" style="left:194px;top:8px">Cân nước</div>
    <div class="btn" style="left:284px;top:8px">Cân phụ gia</div>
    <div class="btn" style="left:14px;top:42px">Auto</div>
    <div class="btn" style="left:104px;top:42px">Semi Auto</div>
    <div class="btn g" style="left:194px;top:42px">Pause</div>
    <div class="btn" style="left:284px;top:42px">Rửa trạm</div>
  </div>
  <div id="bottom"></div>
  <div class="abs" style="left:4px;top:540px;width:1011px;height:1px;background:#161c6c"></div><div class="abs" style="left:4px;top:541px;width:1011px;height:1px;background:#4a90d8"></div><div class="abs" style="left:4px;top:542px;width:1011px;height:1px;background:#f6f0dc"></div>
  <div class="abs" style="left:0;top:22px;width:2px;height:720px;background:#0a22c8"></div><div class="abs" style="left:2px;top:22px;width:2px;height:720px;background:#1a6ef0"></div>
  <div class="abs" style="left:1015px;top:22px;width:2px;height:720px;background:#0850e6"></div><div class="abs" style="left:1017px;top:22px;width:2px;height:720px;background:#0424b4"></div>
  <div class="abs" style="left:0;top:0">
<div class="abs" style="left:9px;top:556px;width:477px;height:175px;border-top:1px solid #aca899;border-left:1px solid #aca899;border-right:1px solid #fff;border-bottom:1px solid #fff"></div>
<div class="abs" style="left:10px;top:557px;width:475px;height:173px;border-top:1px solid #716f64;border-left:1px solid #716f64;border-right:1px solid #f1efe2;border-bottom:1px solid #f1efe2;background:#808080;overflow:hidden">
<div class="abs" style="left:0px;top:0;width:64px;height:16px;background:#400000;border-top:1px solid #fff;border-left:1px solid #fff;border-right:1px solid #000;border-bottom:1px solid #000"></div>
<div class="htx" style="left:0px;width:61px;text-align:right">ID</div>
<div class="abs" style="left:0px;top:16px;width:64px;height:16px;background:#fff;border-right:1px solid #c0c0c0;border-bottom:1px solid #c0c0c0"></div>
<div class="dtx" style="left:0px;top:16px;width:61px;text-align:right">1</div>
<div class="abs" style="left:0px;top:32px;width:64px;height:16px;background:#fff;border-right:1px solid #c0c0c0;border-bottom:1px solid #000"></div>
<div class="dtx" style="left:0px;top:32px;width:61px;text-align:right">2</div>
<div class="abs" style="left:64px;top:0;width:64px;height:16px;background:#400000;border-top:1px solid #fff;border-left:1px solid #fff;border-right:1px solid #000;border-bottom:1px solid #000"></div>
<div class="htx" style="left:67px">MacBetong</div>
<div class="abs" style="left:64px;top:16px;width:64px;height:16px;background:#fff;border-right:1px solid #c0c0c0;border-bottom:1px solid #c0c0c0"></div>
<div class="dtx" style="left:67px;top:16px">M600</div>
<div class="abs" style="left:64px;top:32px;width:64px;height:16px;background:#fff;border-right:1px solid #c0c0c0;border-bottom:1px solid #000"></div>
<div class="dtx" style="left:67px;top:32px">M300</div>
<div class="abs" style="left:128px;top:0;width:64px;height:16px;background:#400000;border-top:1px solid #fff;border-left:1px solid #fff;border-right:1px solid #000;border-bottom:1px solid #000"></div>
<div class="htx" style="left:131px">Cat</div>
<div class="abs" style="left:128px;top:16px;width:64px;height:16px;background:#fff;border-right:1px solid #c0c0c0;border-bottom:1px solid #c0c0c0"></div>
<div class="dtx" style="left:131px;top:16px">383</div>
<div class="abs" style="left:128px;top:32px;width:64px;height:16px;background:#fff;border-right:1px solid #c0c0c0;border-bottom:1px solid #000"></div>
<div class="dtx" style="left:131px;top:32px">718</div>
<div class="abs" style="left:192px;top:0;width:64px;height:16px;background:#400000;border-top:1px solid #fff;border-left:1px solid #fff;border-right:1px solid #000;border-bottom:1px solid #000"></div>
<div class="htx" style="left:195px">Da1</div>
<div class="abs" style="left:192px;top:16px;width:64px;height:16px;background:#fff;border-right:1px solid #c0c0c0;border-bottom:1px solid #c0c0c0"></div>
<div class="dtx" style="left:195px;top:16px">545</div>
<div class="abs" style="left:192px;top:32px;width:64px;height:16px;background:#fff;border-right:1px solid #c0c0c0;border-bottom:1px solid #000"></div>
<div class="dtx" style="left:195px;top:32px">1171</div>
<div class="abs" style="left:256px;top:0;width:64px;height:16px;background:#400000;border-top:1px solid #fff;border-left:1px solid #fff;border-right:1px solid #000;border-bottom:1px solid #000"></div>
<div class="htx" style="left:259px">Da2</div>
<div class="abs" style="left:256px;top:16px;width:64px;height:16px;background:#fff;border-right:1px solid #c0c0c0;border-bottom:1px solid #c0c0c0"></div>
<div class="dtx" style="left:259px;top:16px">0</div>
<div class="abs" style="left:256px;top:32px;width:64px;height:16px;background:#fff;border-right:1px solid #c0c0c0;border-bottom:1px solid #000"></div>
<div class="dtx" style="left:259px;top:32px">0</div>
<div class="abs" style="left:320px;top:0;width:64px;height:16px;background:#400000;border-top:1px solid #fff;border-left:1px solid #fff;border-right:1px solid #000;border-bottom:1px solid #000"></div>
<div class="htx" style="left:323px">XiMang</div>
<div class="abs" style="left:320px;top:16px;width:64px;height:16px;background:#fff;border-right:1px solid #c0c0c0;border-bottom:1px solid #c0c0c0"></div>
<div class="dtx" style="left:323px;top:16px">250.0</div>
<div class="abs" style="left:320px;top:32px;width:64px;height:16px;background:#fff;border-right:1px solid #c0c0c0;border-bottom:1px solid #000"></div>
<div class="dtx" style="left:323px;top:32px">392.0</div>
<div class="abs" style="left:384px;top:0;width:64px;height:16px;background:#400000;border-top:1px solid #fff;border-left:1px solid #fff;border-right:1px solid #000;border-bottom:1px solid #000"></div>
<div class="htx" style="left:387px">Nuoc</div>
<div class="abs" style="left:384px;top:16px;width:64px;height:16px;background:#fff;border-right:1px solid #c0c0c0;border-bottom:1px solid #c0c0c0"></div>
<div class="dtx" style="left:387px;top:16px">40.0</div>
<div class="abs" style="left:384px;top:32px;width:64px;height:16px;background:#fff;border-right:1px solid #c0c0c0;border-bottom:1px solid #000"></div>
<div class="dtx" style="left:387px;top:32px">150.0</div>
<div class="abs" style="left:448px;top:0;width:64px;height:16px;background:#400000;border-top:1px solid #fff;border-left:1px solid #fff;border-right:1px solid #000;border-bottom:1px solid #000"></div>
<div class="htx" style="left:451px">PhuGia</div>
<div class="abs" style="left:448px;top:16px;width:64px;height:16px;background:#fff;border-right:1px solid #c0c0c0;border-bottom:1px solid #c0c0c0"></div>
<div class="dtx" style="left:451px;top:16px">2.02</div>
<div class="abs" style="left:448px;top:32px;width:64px;height:16px;background:#fff;border-right:1px solid #c0c0c0;border-bottom:1px solid #000"></div>
<div class="dtx" style="left:451px;top:32px">3.14</div>
<div class="abs" style="left:0;top:154px;width:473px;height:17px;background-color:#f7f5ee;background-image:repeating-conic-gradient(#ece9d8 0 25%,#fdfcf8 0 50%);background-size:2px 2px"></div>
<div class="abs" style="left:0;top:154px;width:17px;height:17px;background:#ece9d8;border-top:1px solid #f6f5ef;border-left:1px solid #f6f5ef;border-right:1px solid #716f64;border-bottom:1px solid #716f64;box-shadow:inset -1px -1px 0 #aca899, inset 1px 1px 0 #fff"><div class="abs" style="left:5px;top:4px;width:0;height:0;border-top:4px solid transparent;border-bottom:4px solid transparent;border-right:4px solid #000"></div></div>
<div class="abs" style="left:17px;top:154px;width:17px;height:17px;background:#ece9d8;border-top:1px solid #f6f5ef;border-left:1px solid #f6f5ef;border-right:1px solid #716f64;border-bottom:1px solid #716f64;box-shadow:inset -1px -1px 0 #aca899, inset 1px 1px 0 #fff"></div>
<div class="abs" style="left:456px;top:154px;width:17px;height:17px;background:#ece9d8;border-top:1px solid #f6f5ef;border-left:1px solid #f6f5ef;border-right:1px solid #716f64;border-bottom:1px solid #716f64;box-shadow:inset -1px -1px 0 #aca899, inset 1px 1px 0 #fff"><div class="abs" style="left:6px;top:4px;width:0;height:0;border-top:4px solid transparent;border-bottom:4px solid transparent;border-left:4px solid #000"></div></div>
</div>
    <div class="abs" style="left:638px;top:565px;width:13px;height:13px;background:#fff;border-top:1px solid #716f64;border-left:1px solid #716f64;border-right:1px solid #f1efe2;border-bottom:1px solid #f1efe2;box-shadow:inset 1px 1px 0 #aca899"></div>
    <div class="lbl" style="left:656px;top:564px;letter-spacing:-0.15px">Tự động in phiếu</div>
    <div class="lbl" style="left:534px;top:597.8px;letter-spacing:-0.25px">Người vận hành</div>
    <div class="lbl" style="left:536px;top:629.8px;letter-spacing:-0.2px">Mác bê tông</div>
    <div class="tb" style="left:638px;top:593px;width:173px;height:25px;line-height:18px;letter-spacing:-0.1px">Lò Thị Thoàn</div>
    <div class="tb" style="left:638px;top:625px;width:173px;height:25px;line-height:18px;letter-spacing:-0.1px">Các mác</div>
  </div>
</div>
</body></html>
